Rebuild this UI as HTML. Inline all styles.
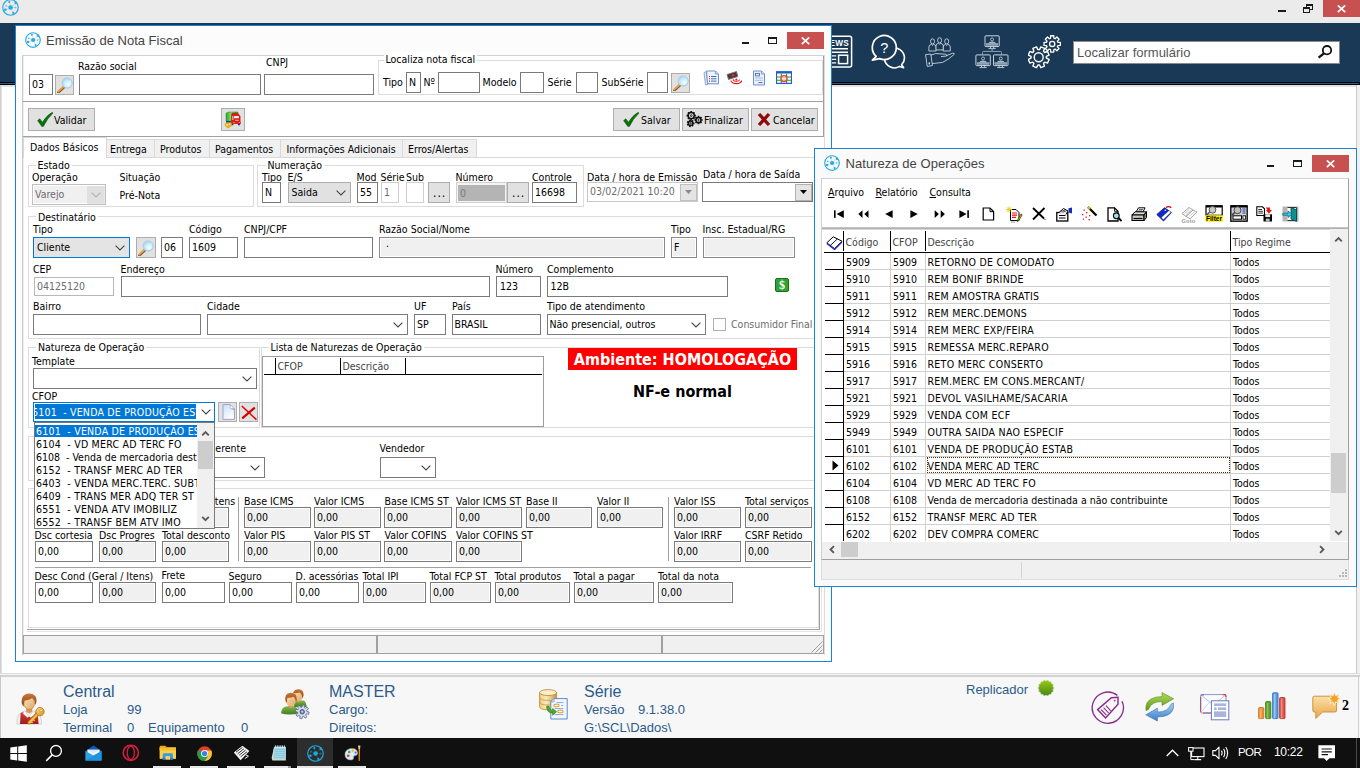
<!DOCTYPE html>
<html lang="pt-BR"><head><meta charset="utf-8"><title>Emissão de Nota Fiscal</title>
<style>
*{margin:0;padding:0}
html,body{width:1360px;height:768px;overflow:hidden;background:#fff}
body{position:relative;font-family:"DejaVu Sans Condensed","Liberation Sans",sans-serif;font-size:10.5px;color:#000}
div,span,svg.a{position:absolute;box-sizing:content-box}
.t{white-space:nowrap;line-height:14px;height:14px}
.f{border:1px solid #7a7a7a;background:#fff;white-space:nowrap;overflow:hidden;text-indent:2px}
.g{background:#f0f0f0;box-shadow:inset 0 0 0 1px #fff}
.d{color:#6d6d6d}
.btn{border:1px solid #adadad;background:#e1e1e1;box-sizing:border-box}
.ar{font-family:"Liberation Sans",sans-serif;color:#2b5b8c;white-space:nowrap}
.ti{font-family:"Liberation Sans",sans-serif;font-size:13px;color:#444;white-space:nowrap;line-height:18px}
</style></head>
<body>
<div style="left:0px;top:0px;width:1360px;height:23px;background:#ebebeb"></div>
<svg class="a" style="left:2px;top:-1px" width="17" height="17" viewBox="0 0 16 16" ><circle cx="8" cy="8" r="7.3" fill="none" stroke="#29abe2" stroke-width="1.15"/>
<path d="M8.1 8L6.9 2.8M8.1 8L13 3.7M8.1 8L3.1 10.1M8.1 8L10.6 13.1M8.1 8L3.6 6.2M8.1 8L12.9 8" stroke="#29abe2" stroke-width="0.45" opacity="0.5"/>
<circle cx="8.1" cy="8" r="2.1" fill="#29abe2"/>
<circle cx="6.9" cy="2.8" r="1" fill="#29abe2"/><circle cx="13" cy="3.7" r="1.3" fill="#29abe2"/>
<circle cx="3.1" cy="10.1" r="1.25" fill="#29abe2"/><circle cx="10.6" cy="13.1" r="1.05" fill="#29abe2"/>
<path d="M2.9 6.9L3.8 5.3L4.6 6.9Z" fill="#29abe2"/><circle cx="12.8" cy="8" r="0.9" fill="#29abe2" opacity="0.55"/></svg>
<div style="left:1278px;top:10px;width:8px;height:2px;background:#1a1a1a"></div>
<div style="left:1306px;top:4px;width:7px;height:6px;border:1px solid #1a1a1a;border-top-width:2px;box-sizing:border-box"></div>
<div style="left:1303px;top:7px;width:7px;height:6px;border:1px solid #1a1a1a;border-top-width:2px;box-sizing:border-box;background:#ebebeb"></div>
<div style="left:1323px;top:0px;width:37px;height:17px;background:#c75050"></div>
<svg class="a" style="left:1337px;top:5px" width="9" height="7.5" viewBox="0 0 9 7.5" ><path d="M0.8 0.4L8.2 7.1M8.2 0.4L0.8 7.1" stroke="#fff" stroke-width="1.7"/></svg>
<div style="left:0px;top:23px;width:1360px;height:59px;background:#193956"></div>
<div style="left:0px;top:82px;width:1360px;height:3px;background:#000"></div>
<div style="left:0px;top:83px;width:1359px;height:1px;background:#2a5a8a"></div>
<div style="left:0px;top:85px;width:1360px;height:2px;background:#e2e2e2"></div>
<div style="left:0px;top:85px;width:1px;height:588px;background:#cfcfcf"></div>
<div style="left:1px;top:85px;width:1px;height:588px;background:#e2e2e2"></div>
<div style="left:1356px;top:85px;width:1px;height:588px;background:#c9c9c9"></div>
<div style="left:1357px;top:85px;width:3px;height:588px;background:#f0f0f0"></div>
<svg class="a" style="left:820px;top:35px" width="33" height="34" viewBox="0 0 33 34" id="hdr-news"><rect x="1" y="1.2" width="30.6" height="30.8" rx="2" fill="none" stroke="#ffffff" stroke-width="1.5"/><text x="3.2" y="10.6" font-family="Liberation Sans,sans-serif" font-weight="bold" font-size="8.2" fill="#ffffff" letter-spacing="0.3">NEWS</text><path d="M4 13.7H28M4 17.2H28" stroke="#ffffff" stroke-width="1.5"/><path d="M4 20.9H16.2M4 24.4H16.2M4 27.9H16.2" stroke="#ffffff" stroke-width="1.4"/><rect x="18.6" y="20.2" width="9" height="8.4" fill="none" stroke="#ffffff" stroke-width="1.5"/></svg>
<svg class="a" style="left:870px;top:34px" width="36" height="36" viewBox="0 0 36 36" ><path d="M29.6 32.4A10 10 0 1 1 31.6 30.8L33.6 33.8Z" fill="none" stroke="#ffffff" stroke-width="1.6" stroke-linejoin="round"/><path d="M6.2 22.4A12 12 0 1 1 9.6 24.6L2.4 26.2Z" fill="#193956" stroke="#ffffff" stroke-width="1.7" stroke-linejoin="round"/><text x="14.3" y="19.2" text-anchor="middle" font-family="Liberation Sans,sans-serif" font-size="14.5" fill="#ffffff">?</text></svg>
<svg class="a" style="left:925px;top:35px" width="31" height="33" viewBox="0 0 31 33" ><path d="M3.9 16.0V12.0Q3.9 9.8 6.3 9.4L7.5 10.4L8.7 9.4Q11.1 9.8 11.1 12.0V16.0Z" fill="#193956" stroke="#dfe6ec" stroke-width="0.8"/><ellipse cx="7.5" cy="6.4" rx="2" ry="2.6" fill="#193956" stroke="#dfe6ec" stroke-width="0.8"/><path d="M18.099999999999998 16.0V12.0Q18.099999999999998 9.8 20.5 9.4L21.7 10.4L22.9 9.4Q25.3 9.8 25.3 12.0V16.0Z" fill="#193956" stroke="#dfe6ec" stroke-width="0.8"/><ellipse cx="21.7" cy="6.4" rx="2" ry="2.6" fill="#193956" stroke="#dfe6ec" stroke-width="0.8"/><path d="M11.0 14.899999999999999V10.899999999999999Q11.0 8.7 13.4 8.3L14.6 9.3L15.799999999999999 8.3Q18.2 8.7 18.2 10.899999999999999V14.899999999999999Z" fill="#193956" stroke="#dfe6ec" stroke-width="0.8"/><ellipse cx="14.6" cy="5.3" rx="2" ry="2.6" fill="#193956" stroke="#dfe6ec" stroke-width="0.8"/><path d="M0.6 19.6L5.8 19L7.4 30.6L2.2 31.4Z" fill="none" stroke="#dfe6ec" stroke-width="0.8"/><path d="M5.9 20.2Q11 17.6 15 18.8L20.5 19.2Q22.4 19.6 21.6 21L16 21.6M21.6 20.6L27.6 18.2Q29.8 17.8 29.2 19.4Q23 25 17.6 27.4L7.2 28.6" fill="none" stroke="#dfe6ec" stroke-width="0.8" stroke-linejoin="round"/><rect x="3.6" y="27.4" width="1.4" height="2" fill="#dfe6ec"/></svg>
<svg class="a" style="left:975px;top:35px" width="34" height="34" viewBox="0 0 34 34" ><rect x="10" y="0.8" width="14.2" height="10.8" rx="0.8" fill="none" stroke="#dfe6ec" stroke-width="0.9"/><rect x="11" y="8.200000000000001" width="12.2" height="2.6" fill="#8fa3b4"/><circle cx="17.1" cy="4.4" r="1.5" fill="none" stroke="#dfe6ec" stroke-width="0.7"/><path d="M13.100000000000001 8.400000000000002Q13.700000000000001 6.6 17.1 6.3999999999999995Q20.5 6.6 21.1 8.400000000000002Z" fill="#a9b9c6"/><path d="M15.500000000000002 11.600000000000001V13.200000000000001M18.700000000000003 11.600000000000001V13.200000000000001M13.500000000000002 13.600000000000001H20.700000000000003" stroke="#dfe6ec" stroke-width="0.8"/><rect x="0.9" y="19.9" width="14.4" height="10.7" rx="0.8" fill="none" stroke="#dfe6ec" stroke-width="0.9"/><rect x="1.9" y="27.2" width="12.4" height="2.6" fill="#8fa3b4"/><circle cx="8.1" cy="23.5" r="1.5" fill="none" stroke="#dfe6ec" stroke-width="0.7"/><path d="M4.1 27.4Q4.699999999999999 25.7 8.1 25.5Q11.5 25.7 12.1 27.4Z" fill="#a9b9c6"/><path d="M6.5 30.599999999999998V32.199999999999996M9.7 30.599999999999998V32.199999999999996M4.5 32.599999999999994H11.7" stroke="#dfe6ec" stroke-width="0.8"/><rect x="18.5" y="19.9" width="14.5" height="10.7" rx="0.8" fill="none" stroke="#dfe6ec" stroke-width="0.9"/><rect x="19.5" y="27.2" width="12.5" height="2.6" fill="#8fa3b4"/><circle cx="25.75" cy="23.5" r="1.5" fill="none" stroke="#dfe6ec" stroke-width="0.7"/><path d="M21.75 27.4Q22.35 25.7 25.75 25.5Q29.15 25.7 29.75 27.4Z" fill="#a9b9c6"/><path d="M24.15 30.599999999999998V32.199999999999996M27.35 30.599999999999998V32.199999999999996M22.15 32.599999999999994H29.35" stroke="#dfe6ec" stroke-width="0.8"/><path d="M17.1 14V16.4M7.6 19.6V17.4Q7.6 16.4 8.6 16.4H25.4Q26.4 16.4 26.4 17.4V19.6" fill="none" stroke="#8fa3b4" stroke-width="1"/></svg>
<svg class="a" style="left:1027.5px;top:35px" width="34" height="34" viewBox="0 0 34 34" ><path d="M18.36 23.13 L21.08 24.47 L19.57 28.10 L16.70 27.13 L15.53 28.30 L16.50 31.17 L12.87 32.68 L11.53 29.96 L9.87 29.96 L8.53 32.68 L4.90 31.17 L5.87 28.30 L4.70 27.13 L1.83 28.10 L0.32 24.47 L3.04 23.13 L3.04 21.47 L0.32 20.13 L1.83 16.50 L4.70 17.47 L5.87 16.30 L4.90 13.43 L8.53 11.92 L9.87 14.64 L11.53 14.64 L12.87 11.92 L16.50 13.43 L15.53 16.30 L16.70 17.47 L19.57 16.50 L21.08 20.13 L18.36 21.47Z" fill="none" stroke="#ffffff" stroke-width="1.4" stroke-linejoin="round"/><circle cx="10.7" cy="22.3" r="4.5" fill="none" stroke="#ffffff" stroke-width="1.4"/><path d="M29.86 7.24 L32.36 7.36 L32.36 10.44 L29.86 10.56 L29.38 11.73 L31.06 13.58 L28.88 15.76 L27.03 14.08 L25.86 14.56 L25.74 17.06 L22.66 17.06 L22.54 14.56 L21.37 14.08 L19.52 15.76 L17.34 13.58 L19.02 11.73 L18.54 10.56 L16.04 10.44 L16.04 7.36 L18.54 7.24 L19.02 6.07 L17.34 4.22 L19.52 2.04 L21.37 3.72 L22.54 3.24 L22.66 0.74 L25.74 0.74 L25.86 3.24 L27.03 3.72 L28.88 2.04 L31.06 4.22 L29.38 6.07Z" fill="#193956" stroke="#ffffff" stroke-width="1.3" stroke-linejoin="round"/><circle cx="24.2" cy="8.9" r="2.6" fill="none" stroke="#ffffff" stroke-width="1.3"/></svg>
<div style="left:1073px;top:41px;width:267px;height:23px;background:#fff;border:1px solid #8a8a8a;box-sizing:border-box"></div>
<span style="left:1077px;top:44px;font:13px 'Liberation Sans',sans-serif;color:#555;line-height:18px;white-space:nowrap">Localizar formulário</span>
<svg class="a" style="left:1317px;top:44px" width="16" height="16" viewBox="0 0 16 16" ><circle cx="10" cy="6.2" r="4.2" fill="none" stroke="#111" stroke-width="1.8"/><path d="M7 9.4L1.6 13.6" stroke="#111" stroke-width="2.4" stroke-linecap="butt"/></svg>
<div style="left:15px;top:25px;width:817px;height:637px;background:#fff;border:1px solid #1883d7;box-sizing:border-box"></div>
<div style="left:16px;top:26px;width:815px;height:29px;background:#fcfcfc"></div>
<svg class="a" style="left:25px;top:32px" width="16" height="16" viewBox="0 0 16 16" ><circle cx="8" cy="8" r="7.3" fill="none" stroke="#29abe2" stroke-width="1.15"/>
<path d="M8.1 8L6.9 2.8M8.1 8L13 3.7M8.1 8L3.1 10.1M8.1 8L10.6 13.1M8.1 8L3.6 6.2M8.1 8L12.9 8" stroke="#29abe2" stroke-width="0.45" opacity="0.5"/>
<circle cx="8.1" cy="8" r="2.1" fill="#29abe2"/>
<circle cx="6.9" cy="2.8" r="1" fill="#29abe2"/><circle cx="13" cy="3.7" r="1.3" fill="#29abe2"/>
<circle cx="3.1" cy="10.1" r="1.25" fill="#29abe2"/><circle cx="10.6" cy="13.1" r="1.05" fill="#29abe2"/>
<path d="M2.9 6.9L3.8 5.3L4.6 6.9Z" fill="#29abe2"/><circle cx="12.8" cy="8" r="0.9" fill="#29abe2" opacity="0.55"/></svg>
<span class="ti" style="left:46px;top:32px">Emissão de Nota Fiscal</span>
<div style="left:742px;top:42px;width:7px;height:2px;background:#1a1a1a"></div>
<div style="left:768px;top:37px;width:9px;height:7px;border:1px solid #1a1a1a;border-top-width:2px;box-sizing:border-box"></div>
<div style="left:787px;top:32px;width:37px;height:17px;background:#c75050"></div>
<svg class="a" style="left:801px;top:37px" width="9" height="7.5" viewBox="0 0 9 7.5" ><path d="M0.8 0.4L8.2 7.1M8.2 0.4L0.8 7.1" stroke="#fff" stroke-width="1.7"/></svg>
<div style="left:16px;top:55px;width:815px;height:606px;background:#fcfcfc"></div>
<div style="left:23px;top:56px;width:800px;height:578px;background:#fff"></div>
<div style="left:22px;top:55px;width:802px;height:1px;background:#d2d2d2"></div>
<div style="left:22px;top:55px;width:1px;height:600px;background:#c8c8c8"></div>
<div style="left:23px;top:56px;width:1px;height:599px;background:#f0f0f0"></div>
<div style="left:823px;top:56px;width:1px;height:81px;background:#a0a0a0"></div>
<div style="left:824px;top:55px;width:1px;height:600px;background:#dcdcdc"></div>
<span class="t" style="left:78px;top:59px;">Razão social</span>
<span class="t" style="left:266px;top:55px;">CNPJ</span>
<div class="f" style="left:29px;top:74px;width:22px;height:19px;line-height:18px;">03</div>
<div class="btn" style="left:55px;top:75px;width:19px;height:20px;"></div>
<svg class="a" style="left:56.5px;top:76.5px" width="16" height="16" viewBox="0 0 16 16" ><defs><radialGradient id="gLens" cx="0.62" cy="0.66" r="0.75"><stop offset="0" stop-color="#f4ffff"/><stop offset="0.55" stop-color="#c4ecfc"/><stop offset="1" stop-color="#9ccaf2"/></radialGradient></defs><path d="M6.9 10.2L1.3 15.4" stroke="#6a6258" stroke-width="2.6" stroke-linecap="round"/><path d="M6.7 9.7L1.1 14.7" stroke="#f8a02c" stroke-width="1.7" stroke-linecap="round"/><circle cx="10.3" cy="6.3" r="5.1" fill="#8c9aa6" opacity="0.55"/><circle cx="10.1" cy="5.9" r="5" fill="url(#gLens)" stroke="#b4c6e4" stroke-width="0.8"/></svg>
<div class="f" style="left:79px;top:74px;width:180px;height:19px;line-height:18px;"></div>
<div class="f" style="left:264px;top:74px;width:108px;height:19px;line-height:18px;"></div>
<div style="left:378px;top:59.5px;width:445px;height:35.5px;border:1px solid #dcdcdc;box-sizing:border-box"></div>
<span class="t gl" style="left:383.5px;top:52px;padding:0 2px;background:#fff">Localiza nota fiscal</span>
<span class="t" style="left:383px;top:75px;">Tipo</span>
<div class="f" style="left:406px;top:72px;width:13px;height:19px;line-height:18px;">N</div>
<span class="t" style="left:423.5px;top:75px;">Nº</span>
<div class="f" style="left:438px;top:72px;width:40px;height:19px;line-height:18px;"></div>
<span class="t" style="left:482.5px;top:75px;">Modelo</span>
<div class="f" style="left:520px;top:72px;width:22px;height:19px;line-height:18px;"></div>
<span class="t" style="left:547.5px;top:75px;">Série</span>
<div class="f" style="left:576px;top:72px;width:20px;height:19px;line-height:18px;"></div>
<span class="t" style="left:601.5px;top:75px;">SubSérie</span>
<div class="f" style="left:647px;top:72px;width:19px;height:19px;line-height:18px;"></div>
<div class="btn" style="left:671px;top:73px;width:19px;height:20px;"></div>
<svg class="a" style="left:672.5px;top:75px" width="16" height="16" viewBox="0 0 16 16" ><defs><radialGradient id="gLens" cx="0.62" cy="0.66" r="0.75"><stop offset="0" stop-color="#f4ffff"/><stop offset="0.55" stop-color="#c4ecfc"/><stop offset="1" stop-color="#9ccaf2"/></radialGradient></defs><path d="M6.9 10.2L1.3 15.4" stroke="#6a6258" stroke-width="2.6" stroke-linecap="round"/><path d="M6.7 9.7L1.1 14.7" stroke="#f8a02c" stroke-width="1.7" stroke-linecap="round"/><circle cx="10.3" cy="6.3" r="5.1" fill="#8c9aa6" opacity="0.55"/><circle cx="10.1" cy="5.9" r="5" fill="url(#gLens)" stroke="#b4c6e4" stroke-width="0.8"/></svg>
<svg class="a" style="left:703px;top:70px" width="16" height="16" viewBox="0 0 16 16" ><path d="M1 2.5L3.5 1.5L5 14.5L2.5 15Z" fill="#dfe9f7" stroke="#7d98c8" stroke-width="0.8"/><path d="M3.5 1H12.5L15.5 4V13.8H4.5Z" fill="#eef4fc" stroke="#6f8fd0" stroke-width="1"/><path d="M12.5 1V4H15.5" fill="#cddcf4" stroke="#6f8fd0" stroke-width="0.8"/><path d="M8 6.5H13.5M8 8.8H13.5M8 11.1H13.5" stroke="#4b6fc0" stroke-width="1"/><path d="M6 6.5H7M6 8.8H7M6 11.1H7" stroke="#d02020" stroke-width="1.1"/></svg>
<svg class="a" style="left:726px;top:70px" width="16" height="16" viewBox="0 0 16 16" ><path d="M1 4.5L10.5 1.5L11.8 6.5L2.5 9.5Z" fill="#3a3a3a" stroke="#777" stroke-width="0.9"/><path d="M3.5 5.2L9.5 3.4L10 5.6L4.2 7.4Z" fill="#8a2a2a"/><circle cx="7" cy="5.3" r="1.1" fill="#ff3030"/><path d="M7.2 9.2A3.2 1.7 0 1 0 13.5 9.6" fill="none" stroke="#e01818" stroke-width="1"/><path d="M5 10.6A5.2 3 0 1 0 15.6 10.5" fill="none" stroke="#e01818" stroke-width="1.1"/><circle cx="10.3" cy="9.6" r="1" fill="#e01818"/></svg>
<svg class="a" style="left:752px;top:70px" width="14" height="16" viewBox="0 0 14 16" ><path d="M1.5 1H9.5L12.5 4V15H1.5Z" fill="#eaf1fb" stroke="#6f8fd0" stroke-width="1"/><path d="M9.5 1V4H12.5" fill="#cddcf4" stroke="#6f8fd0" stroke-width="0.8"/><rect x="3.5" y="3.5" width="4" height="2.4" fill="none" stroke="#4b6fc0" stroke-width="0.9"/><path d="M3.5 8H10.5M3.5 10.3H10.5" stroke="#6f8fd0" stroke-width="0.9" stroke-dasharray="1.2 0.8"/><path d="M6.5 12.6H10.5" stroke="#4b6fc0" stroke-width="1"/></svg>
<svg class="a" style="left:776px;top:71px" width="16" height="13" viewBox="0 0 16 13" ><rect x="0.5" y="0.8" width="15" height="11.6" fill="#fff" stroke="#1f5fc8" stroke-width="1.2"/><rect x="0.5" y="0.5" width="15" height="2" fill="#1f5fc8"/><path d="M0.5 6H15.5M0.5 9.3H15.5M5.3 2.5V12.4M10.6 2.5V12.4" stroke="#2e8b3a" stroke-width="1.1"/><circle cx="8" cy="7.6" r="3" fill="#f3d9cf" fill-opacity="0.7" stroke="#e8452c" stroke-width="1.2"/></svg>
<div style="left:23px;top:101px;width:800px;height:1px;background:#a0a0a0"></div>
<div class="btn" style="left:28px;top:108px;width:67px;height:23px;"></div>
<svg class="a" style="left:37px;top:112.3px" width="16.5" height="15" viewBox="0 0 16.5 15" ><path d="M0.6 8.6L2.8 6.8L5.4 10.2Q9.4 3.6 15.2 0.3L16 1.1Q10 6.8 6.4 14.4H4.8Z" fill="#0b720b" stroke="#064a06" stroke-width="0.5" stroke-linejoin="round"/></svg>
<span class="t" style="left:54px;top:113px;">Validar</span>
<div class="btn" style="left:221px;top:108px;width:24px;height:23px;"></div>
<svg class="a" style="left:221px;top:108px" width="24" height="23" viewBox="0 0 24 23" ><defs><linearGradient id="gTk" x1="0" y1="0" x2="1" y2="0"><stop offset="0" stop-color="#2ea02e"/><stop offset="0.45" stop-color="#86e466"/><stop offset="1" stop-color="#2ea02e"/></linearGradient></defs><path d="M5 5.2L7.6 4H16.8V6H10.6V13.2H5Z" fill="url(#gTk)" stroke="#1f8a1f" stroke-width="0.5"/><rect x="5" y="13" width="5.6" height="1.6" fill="#1838c0"/><path d="M10.6 6.4Q10.6 5.2 11.8 5.2H17L19.2 8.2V15.4H10.4Z" fill="#e01a14" stroke="#b00c0c" stroke-width="0.4"/><rect x="11.4" y="8" width="1" height="4" fill="#f6d8e8"/><rect x="13" y="8.1" width="4.9" height="2.2" rx="0.4" fill="#d8f6fc"/><rect x="14.2" y="11.8" width="3.6" height="0.9" fill="#f4c0c0"/><rect x="11.6" y="13.8" width="8.4" height="2" rx="0.6" fill="#e01a14"/><rect x="12.2" y="14.1" width="1.6" height="0.9" fill="#f8b020"/><rect x="17.8" y="14.1" width="1.6" height="0.9" fill="#f8b020"/><ellipse cx="11.4" cy="16.4" rx="1.1" ry="0.9" fill="#1030b0"/><ellipse cx="18" cy="16.4" rx="1.2" ry="0.9" fill="#1030b0"/><path d="M4 16.2Q4.4 14.6 6.4 15L8.6 14.6Q10.8 14.8 10.8 16.6Q10.8 18.4 9 18.6Q8.6 19.8 7 19.8Q5.6 19.8 5.4 18.6Q3.8 18.2 4 16.2Z" fill="#f0b400" stroke="#c88c00" stroke-width="0.4"/><ellipse cx="6" cy="16.8" rx="0.9" ry="0.7" fill="#fff6b0"/><ellipse cx="8.4" cy="16.4" rx="0.8" ry="0.6" fill="#fff6b0"/></svg>
<div class="btn" style="left:613px;top:108px;width:67px;height:23px;"></div>
<svg class="a" style="left:623px;top:112.3px" width="16.5" height="15" viewBox="0 0 16.5 15" ><path d="M0.6 8.6L2.8 6.8L5.4 10.2Q9.4 3.6 15.2 0.3L16 1.1Q10 6.8 6.4 14.4H4.8Z" fill="#0b720b" stroke="#064a06" stroke-width="0.5" stroke-linejoin="round"/></svg>
<span class="t" style="left:641px;top:113px;">Salvar</span>
<div class="btn" style="left:682px;top:108px;width:67px;height:23px;"></div>
<svg class="a" style="left:686px;top:111px" width="17" height="17" viewBox="0 0 17 17" ><circle cx="5.2" cy="4.6" r="3.1" fill="none" stroke="#111" stroke-width="1.5"/><path d="M8.0 4.6L9.9 4.6M7.2 6.6L8.5 7.9M5.2 7.4L5.2 9.3M3.2 6.6L1.9 7.9M2.4 4.6L0.5 4.6M3.2 2.6L1.9 1.3M5.2 1.8L5.2 -0.1M7.2 2.6L8.5 1.3" stroke="#111" stroke-width="1.7"/><circle cx="5.2" cy="4.6" r="0.9" fill="none" stroke="#111" stroke-width="0.9"/><circle cx="12.5" cy="9" r="2.6" fill="none" stroke="#111" stroke-width="1.5"/><path d="M14.8 9.0L16.7 9.0M14.1 10.6L15.5 12.0M12.5 11.3L12.5 13.2M10.9 10.6L9.5 12.0M10.2 9.0L8.3 9.0M10.9 7.4L9.5 6.0M12.5 6.7L12.5 4.8M14.1 7.4L15.5 6.0" stroke="#111" stroke-width="1.7"/><circle cx="12.5" cy="9" r="0.7" fill="none" stroke="#111" stroke-width="0.9"/><circle cx="4.6" cy="12.3" r="2.3" fill="none" stroke="#111" stroke-width="1.5"/><path d="M6.6 12.3L8.5 12.3M5.8 13.9L7.0 15.3M4.2 14.2L3.7 16.1M2.8 13.2L1.1 14.0M2.8 11.4L1.1 10.6M4.2 10.4L3.7 8.5M5.8 10.7L7.0 9.3" stroke="#111" stroke-width="1.7"/><circle cx="4.6" cy="12.3" r="0.7" fill="none" stroke="#111" stroke-width="0.9"/></svg>
<span class="t" style="left:704px;top:113px;">Finalizar</span>
<div class="btn" style="left:751px;top:108px;width:67px;height:23px;"></div>
<svg class="a" style="left:757px;top:112px" width="14" height="15" viewBox="0 0 14 15" ><path d="M2 2 L12 13 M12 2 L2 13" stroke="#8f0a0a" stroke-width="3.3" stroke-linecap="butt"/></svg>
<span class="t" style="left:773px;top:113px;">Cancelar</span>
<div style="left:23px;top:136px;width:800px;height:1px;background:#a0a0a0"></div>
<div style="left:23px;top:157px;width:800px;height:1px;background:#d9d9d9"></div>
<div style="left:23px;top:137px;width:84px;height:21px;background:#fff;border:1px solid #d9d9d9;border-bottom:none;box-sizing:border-box"></div>
<span class="t" style="left:30px;top:140px;">Dados Básicos</span>
<div style="left:106px;top:139px;width:49px;height:18px;background:#f0f0f0;border:1px solid #d9d9d9;border-bottom:none;box-sizing:border-box"></div>
<span class="t" style="left:110px;top:142px;">Entrega</span>
<div style="left:154px;top:139px;width:56px;height:18px;background:#f0f0f0;border:1px solid #d9d9d9;border-bottom:none;box-sizing:border-box"></div>
<span class="t" style="left:160px;top:142px;">Produtos</span>
<div style="left:209px;top:139px;width:72px;height:18px;background:#f0f0f0;border:1px solid #d9d9d9;border-bottom:none;box-sizing:border-box"></div>
<span class="t" style="left:215px;top:142px;">Pagamentos</span>
<div style="left:280px;top:139px;width:123px;height:18px;background:#f0f0f0;border:1px solid #d9d9d9;border-bottom:none;box-sizing:border-box"></div>
<span class="t" style="left:286.5px;top:142px;">Informações Adicionais</span>
<div style="left:402px;top:139px;width:75px;height:18px;background:#f0f0f0;border:1px solid #d9d9d9;border-bottom:none;box-sizing:border-box"></div>
<span class="t" style="left:408px;top:142px;">Erros/Alertas</span>
<div style="left:819px;top:157px;width:1px;height:473px;background:#a0a0a0"></div>
<div style="left:27px;top:629px;width:793px;height:1px;background:#a0a0a0"></div>
<div style="left:821px;top:157px;width:1px;height:475px;background:#e4e4e4"></div>
<div style="left:27px;top:631px;width:795px;height:1px;background:#e4e4e4"></div>
<div style="left:28px;top:165px;width:226px;height:41.5px;border:1px solid #dcdcdc;box-sizing:border-box"></div>
<span class="t gl" style="left:35.5px;top:158px;padding:0 2px;background:#fff">Estado</span>
<span class="t" style="left:32px;top:170px;">Operação</span>
<span class="t" style="left:119.5px;top:170px;">Situação</span>
<div class="f g d" style="left:32px;top:184px;width:72px;height:19px;line-height:18px;border-color:#bfbfbf">Varejo<svg style="position:absolute;right:4px;top:7px" width="10" height="6" viewBox="0 0 10 6"><path d="M0.6 0.6 L5 5 L9.4 0.6" fill="none" stroke="#9a9a9a" stroke-width="1.1"/></svg></div>
<div style="left:87px;top:185.5px;width:18px;height:18px;background:#cccccc;opacity:.45"></div>
<span class="t" style="left:119.5px;top:188px;">Pré-Nota</span>
<div style="left:257px;top:165px;width:327px;height:41.5px;border:1px solid #dcdcdc;box-sizing:border-box"></div>
<span class="t gl" style="left:265.5px;top:158px;padding:0 2px;background:#fff">Numeração</span>
<span class="t" style="left:262px;top:170px;">Tipo</span>
<span class="t" style="left:287.5px;top:170px;">E/S</span>
<span class="t" style="left:356.5px;top:170px;">Mod</span>
<span class="t" style="left:380.5px;top:170px;">Série</span>
<span class="t" style="left:406px;top:170px;">Sub</span>
<span class="t" style="left:455.5px;top:170px;">Número</span>
<span class="t" style="left:532px;top:170px;">Controle</span>
<div class="f" style="left:262px;top:182px;width:17px;height:19px;line-height:18px;">N</div>
<div class="f" style="left:288px;top:182px;width:61px;height:19px;line-height:18px;background:#e1e1e1;border-color:#adadad;text-indent:2.5px">Saida<svg style="position:absolute;right:4px;top:7px" width="10" height="6" viewBox="0 0 10 6"><path d="M0.6 0.6 L5 5 L9.4 0.6" fill="none" stroke="#444" stroke-width="1.1"/></svg></div>
<div class="f" style="left:357px;top:182px;width:19px;height:19px;line-height:18px;">55</div>
<div class="f d" style="left:381px;top:182px;width:16px;height:19px;line-height:18px;border-color:#d0d0d0">1</div>
<div class="f" style="left:406px;top:182px;width:16px;height:19px;line-height:18px;border-color:#d0d0d0"></div>
<div class="btn" style="left:428px;top:182px;width:22px;height:21px;"></div>
<span class="t" style="left:433px;top:186px;font-size:12px;letter-spacing:1px">...</span>
<div class="f" style="left:456px;top:182px;width:49px;height:19px;line-height:18px;border-color:#d0d0d0;background:#f4f4f4"></div>
<div style="left:458px;top:184.5px;width:47px;height:16.5px;background:#b4b4b4"></div>
<span class="t" style="left:460px;top:186px;color:#7a7a7a">0</span>
<div class="btn" style="left:507px;top:182px;width:22px;height:21px;"></div>
<span class="t" style="left:512px;top:186px;font-size:12px;letter-spacing:1px">...</span>
<div class="f" style="left:532px;top:182px;width:43px;height:19px;line-height:18px;">16698</div>
<span class="t" style="left:587px;top:170px;">Data / hora de Emissão</span>
<div class="f d" style="left:587px;top:182px;width:109px;height:18px;line-height:17px;border-color:#c8c8c8">03/02/2021 10:20</div>
<div style="left:680px;top:184px;width:17px;height:17px;background:#e4e4e4;border:1px solid #c0c0c0;box-sizing:border-box"></div>
<svg class="a" style="left:685px;top:190px" width="7" height="4" viewBox="0 0 7 4" ><path d="M0 0H7L3.5 4Z" fill="#8a8a8a"/></svg>
<span class="t" style="left:703px;top:167px;">Data / hora de Saída</span>
<div class="f" style="left:702px;top:182px;width:109px;height:18px;line-height:17px;"></div>
<div style="left:795px;top:184px;width:17px;height:17px;background:#e4e4e4;border:1px solid #b0b0b0;box-sizing:border-box"></div>
<svg class="a" style="left:800px;top:190px" width="7" height="4" viewBox="0 0 7 4" ><path d="M0 0H7L3.5 4Z" fill="#000"/></svg>
<div style="left:28px;top:216px;width:790.5px;height:122.5px;border:1px solid #dcdcdc;box-sizing:border-box"></div>
<span class="t gl" style="left:36px;top:210px;padding:0 2px;background:#fff">Destinatário</span>
<span class="t" style="left:33px;top:222px;">Tipo</span>
<span class="t" style="left:189px;top:222px;">Código</span>
<span class="t" style="left:244px;top:222px;">CNPJ/CPF</span>
<span class="t" style="left:379px;top:222px;">Razão Social/Nome</span>
<span class="t" style="left:671px;top:222px;">Tipo</span>
<span class="t" style="left:702.5px;top:222px;">Insc. Estadual/RG</span>
<div class="f" style="left:33px;top:237px;width:95px;height:19px;line-height:18px;background:#e4e4e4;border-color:#0078d7;text-indent:3px">Cliente<svg style="position:absolute;right:4px;top:7px" width="10" height="6" viewBox="0 0 10 6"><path d="M0.6 0.6 L5 5 L9.4 0.6" fill="none" stroke="#444" stroke-width="1.1"/></svg></div>
<div class="btn" style="left:136px;top:237px;width:20px;height:21px;"></div>
<svg class="a" style="left:138px;top:239.5px" width="16" height="16" viewBox="0 0 16 16" ><defs><radialGradient id="gLens" cx="0.62" cy="0.66" r="0.75"><stop offset="0" stop-color="#f4ffff"/><stop offset="0.55" stop-color="#c4ecfc"/><stop offset="1" stop-color="#9ccaf2"/></radialGradient></defs><path d="M6.9 10.2L1.3 15.4" stroke="#6a6258" stroke-width="2.6" stroke-linecap="round"/><path d="M6.7 9.7L1.1 14.7" stroke="#f8a02c" stroke-width="1.7" stroke-linecap="round"/><circle cx="10.3" cy="6.3" r="5.1" fill="#8c9aa6" opacity="0.55"/><circle cx="10.1" cy="5.9" r="5" fill="url(#gLens)" stroke="#b4c6e4" stroke-width="0.8"/></svg>
<div class="f" style="left:161px;top:237px;width:20px;height:19px;line-height:18px;">06</div>
<div class="f" style="left:189px;top:237px;width:47px;height:19px;line-height:18px;">1609</div>
<div class="f" style="left:244px;top:237px;width:127px;height:19px;line-height:18px;"></div>
<div class="f g" style="left:379px;top:237px;width:284px;height:19px;line-height:18px;border-color:#8a8a8a"><span style="top:-4px;left:4px">.</span></div>
<div class="f g" style="left:671px;top:237px;width:24px;height:19px;line-height:18px;border-color:#8a8a8a">F</div>
<div class="f g" style="left:703px;top:237px;width:90px;height:19px;line-height:18px;border-color:#8a8a8a"></div>
<span class="t" style="left:33px;top:262px;">CEP</span>
<span class="t" style="left:120.5px;top:262px;">Endereço</span>
<span class="t" style="left:495.5px;top:262px;">Número</span>
<span class="t" style="left:547px;top:262px;">Complemento</span>
<div class="f d" style="left:34px;top:277px;width:78px;height:17px;line-height:16px;border-color:#b8b8b8">04125120</div>
<div class="f" style="left:121px;top:276px;width:367px;height:19px;line-height:18px;"></div>
<div class="f" style="left:496px;top:276px;width:43px;height:19px;line-height:18px;text-indent:3px">123</div>
<div class="f" style="left:547px;top:276px;width:179px;height:19px;line-height:18px;text-indent:2.5px">12B</div>
<svg class="a" style="left:775px;top:278px" width="14" height="14" viewBox="0 0 14 14" ><rect x="0.5" y="0.5" width="13" height="13" rx="1.5" fill="#2fa32f" stroke="#1a6e1a"/><text x="7" y="11.3" text-anchor="middle" font-family="Liberation Serif,serif" font-weight="bold" font-size="12" fill="#fff">$</text></svg>
<span class="t" style="left:33px;top:299px;">Bairro</span>
<span class="t" style="left:207px;top:299px;">Cidade</span>
<span class="t" style="left:414px;top:299px;">UF</span>
<span class="t" style="left:452px;top:299px;">País</span>
<span class="t" style="left:547px;top:299px;">Tipo de atendimento</span>
<div class="f" style="left:33px;top:314px;width:166px;height:19px;line-height:18px;"></div>
<div class="f" style="left:207px;top:314px;width:199px;height:19px;line-height:18px;"><svg style="position:absolute;right:4px;top:7px" width="10" height="6" viewBox="0 0 10 6"><path d="M0.6 0.6 L5 5 L9.4 0.6" fill="none" stroke="#444" stroke-width="1.1"/></svg></div>
<div class="f" style="left:414px;top:314px;width:30px;height:19px;line-height:18px;">SP</div>
<div class="f" style="left:452px;top:314px;width:87px;height:19px;line-height:18px;text-indent:1.5px">BRASIL</div>
<div class="f" style="left:547px;top:314px;width:157px;height:19px;line-height:18px;text-indent:1.5px">Não presencial, outros<svg style="position:absolute;right:4px;top:7px" width="10" height="6" viewBox="0 0 10 6"><path d="M0.6 0.6 L5 5 L9.4 0.6" fill="none" stroke="#444" stroke-width="1.1"/></svg></div>
<div style="left:713px;top:317.5px;width:13px;height:13px;border:1px solid #b0b0b0;background:#fff;box-sizing:border-box"></div>
<span class="t" style="left:731px;top:317px;color:#6d6d6d">Consumidor Final</span>
<div style="left:28px;top:347px;width:231.5px;height:80.5px;border:1px solid #dcdcdc;box-sizing:border-box"></div>
<span class="t gl" style="left:36px;top:340px;padding:0 2px;background:#fff">Natureza de Operação</span>
<span class="t" style="left:32px;top:354px;">Template</span>
<div class="f" style="left:33px;top:368px;width:222px;height:19px;line-height:18px;"><svg style="position:absolute;right:4px;top:7px" width="10" height="6" viewBox="0 0 10 6"><path d="M0.6 0.6 L5 5 L9.4 0.6" fill="none" stroke="#444" stroke-width="1.1"/></svg></div>
<span class="t" style="left:32px;top:389px;">CFOP</span>
<div style="left:261px;top:347px;width:557.5px;height:80.5px;border:1px solid #dcdcdc;box-sizing:border-box"></div>
<span class="t gl" style="left:268.5px;top:340px;padding:0 2px;background:#fff">Lista de Naturezas de Operação</span>
<div style="left:262px;top:356px;width:282px;height:71px;border:1px solid #9c9ca6;background:#fff;box-sizing:border-box"></div>
<div style="left:264px;top:374px;width:278px;height:1px;background:#000"></div>
<div style="left:275px;top:357.5px;width:1px;height:16.5px;background:#000"></div>
<div style="left:340px;top:357.5px;width:1px;height:16.5px;background:#000"></div>
<div style="left:405px;top:357.5px;width:1px;height:16.5px;background:#000"></div>
<span class="t" style="left:277.5px;top:359px;color:#444">CFOP</span>
<span class="t" style="left:342.5px;top:359px;color:#444">Descrição</span>
<div style="left:568px;top:348px;width:229px;height:21.5px;background:#ff0000"></div>
<span style="left:568px;top:349px;width:229px;height:21.5px;line-height:21px;text-align:center;color:#fff;font-weight:bold;font-size:16px;white-space:nowrap">Ambiente: HOMOLOGAÇÃO</span>
<span style="left:568px;top:381px;width:229px;line-height:22px;text-align:center;color:#000;font-weight:bold;font-size:16px;white-space:nowrap">NF-e normal</span>
<div style="left:28px;top:435.5px;width:790.5px;height:45px;border:1px solid #dcdcdc;box-sizing:border-box"></div>
<span class="t" style="left:208px;top:441px;">Gerente</span>
<div class="f" style="left:150px;top:457px;width:113px;height:19px;line-height:18px;"><svg style="position:absolute;right:4px;top:7px" width="10" height="6" viewBox="0 0 10 6"><path d="M0.6 0.6 L5 5 L9.4 0.6" fill="none" stroke="#444" stroke-width="1.1"/></svg></div>
<span class="t" style="left:379.5px;top:441px;">Vendedor</span>
<div class="f" style="left:380px;top:457px;width:54px;height:19px;line-height:18px;"><svg style="position:absolute;right:4px;top:7px" width="10" height="6" viewBox="0 0 10 6"><path d="M0.6 0.6 L5 5 L9.4 0.6" fill="none" stroke="#444" stroke-width="1.1"/></svg></div>
<div style="left:28px;top:488px;width:790.5px;height:140px;border:1px solid #dcdcdc;box-sizing:border-box"></div>
<span class="t" style="left:212px;top:494px;">Itens</span>
<div class="f g" style="left:170px;top:507px;width:57px;height:19px;line-height:18px;"></div>
<div style="left:238px;top:497px;width:1px;height:64px;background:#a0a0a0"></div>
<span class="t" style="left:244px;top:494px;">Base ICMS</span>
<div class="f g" style="left:244px;top:507px;width:65px;height:19px;line-height:18px;">0,00</div>
<span class="t" style="left:314px;top:494px;">Valor ICMS</span>
<div class="f g" style="left:314px;top:507px;width:65px;height:19px;line-height:18px;">0,00</div>
<span class="t" style="left:384.5px;top:494px;">Base ICMS ST</span>
<div class="f g" style="left:384px;top:507px;width:66px;height:19px;line-height:18px;">0,00</div>
<span class="t" style="left:456px;top:494px;">Valor ICMS ST</span>
<div class="f g" style="left:456px;top:507px;width:64px;height:19px;line-height:18px;">0,00</div>
<span class="t" style="left:526px;top:494px;">Base II</span>
<div class="f g" style="left:526px;top:507px;width:64px;height:19px;line-height:18px;">0,00</div>
<span class="t" style="left:597px;top:494px;">Valor II</span>
<div class="f g" style="left:597px;top:507px;width:64px;height:19px;line-height:18px;">0,00</div>
<span class="t" style="left:244px;top:528px;">Valor PIS</span>
<div class="f g" style="left:244px;top:541px;width:65px;height:19px;line-height:18px;">0,00</div>
<span class="t" style="left:314px;top:528px;">Valor PIS ST</span>
<div class="f g" style="left:314px;top:541px;width:65px;height:19px;line-height:18px;">0,00</div>
<span class="t" style="left:384.5px;top:528px;">Valor COFINS</span>
<div class="f g" style="left:384px;top:541px;width:66px;height:19px;line-height:18px;">0,00</div>
<span class="t" style="left:456px;top:528px;">Valor COFINS ST</span>
<div class="f g" style="left:456px;top:541px;width:64px;height:19px;line-height:18px;">0,00</div>
<div style="left:668px;top:497px;width:1px;height:64px;background:#a0a0a0"></div>
<span class="t" style="left:674px;top:494px;">Valor ISS</span>
<div class="f g" style="left:674px;top:507px;width:65px;height:19px;line-height:18px;">0,00</div>
<span class="t" style="left:674px;top:528px;">Valor IRRF</span>
<div class="f g" style="left:674px;top:541px;width:65px;height:19px;line-height:18px;">0,00</div>
<span class="t" style="left:745px;top:494px;">Total serviços</span>
<div class="f g" style="left:745px;top:507px;width:65px;height:19px;line-height:18px;">0,00</div>
<span class="t" style="left:745px;top:528px;">CSRF Retido</span>
<div class="f g" style="left:745px;top:541px;width:65px;height:19px;line-height:18px;">0,00</div>
<span class="t" style="left:34.5px;top:528px;">Dsc cortesia</span>
<div class="f" style="left:35px;top:541px;width:56px;height:19px;line-height:18px;">0,00</div>
<span class="t" style="left:99px;top:528px;">Dsc Progres</span>
<div class="f g" style="left:99px;top:541px;width:55px;height:19px;line-height:18px;">0,00</div>
<span class="t" style="left:162px;top:528px;">Total desconto</span>
<div class="f g" style="left:162px;top:541px;width:65px;height:19px;line-height:18px;">0,00</div>
<div style="left:35px;top:566.5px;width:776px;height:1px;background:#a0a0a0"></div>
<span class="t" style="left:34.5px;top:569px;">Desc Cond (Geral / Itens)</span>
<div class="f" style="left:35px;top:582px;width:56px;height:19px;line-height:18px;">0,00</div>
<div class="f g" style="left:99px;top:582px;width:55px;height:19px;line-height:18px;">0,00</div>
<span class="t" style="left:161.5px;top:568px;">Frete</span>
<div class="f" style="left:162px;top:582px;width:61px;height:19px;line-height:18px;">0,00</div>
<span class="t" style="left:228.5px;top:569px;">Seguro</span>
<div class="f" style="left:229px;top:582px;width:61px;height:19px;line-height:18px;">0,00</div>
<span class="t" style="left:295.5px;top:569px;">D. acessórias</span>
<div class="f" style="left:296px;top:582px;width:61px;height:19px;line-height:18px;">0,00</div>
<span class="t" style="left:362.5px;top:569px;">Total IPI</span>
<div class="f g" style="left:363px;top:582px;width:61px;height:19px;line-height:18px;">0,00</div>
<span class="t" style="left:429.5px;top:569px;">Total FCP ST</span>
<div class="f g" style="left:430px;top:582px;width:59px;height:19px;line-height:18px;">0,00</div>
<span class="t" style="left:494.5px;top:569px;">Total produtos</span>
<div class="f g" style="left:495px;top:582px;width:73px;height:19px;line-height:18px;">0,00</div>
<span class="t" style="left:573.5px;top:569px;">Total a pagar</span>
<div class="f g" style="left:574px;top:582px;width:78px;height:19px;line-height:18px;">0,00</div>
<span class="t" style="left:658px;top:569px;">Total da nota</span>
<div class="f g" style="left:658px;top:582px;width:73px;height:19px;line-height:18px;">0,00</div>
<div style="left:33px;top:402px;width:182px;height:20px;border:1px solid #0078d7;background:#fff;box-sizing:border-box"></div>
<div style="left:35px;top:404px;width:161px;height:15px;background:#0078d7;overflow:hidden"><span class="t" style="left:-3px;top:0.5px;color:#fff;white-space:pre;letter-spacing:0.2px">6101  - VENDA DE PRODUÇÃO ESTAB</span></div>
<svg class="a" style="left:201px;top:409px" width="10" height="6" viewBox="0 0 10 6" ><path d="M0.6 0.6 L5 5 L9.4 0.6" fill="none" stroke="#444" stroke-width="1.1"/></svg>
<div class="btn" style="left:218px;top:402px;width:19px;height:20px;"></div>
<svg class="a" style="left:221.5px;top:404px" width="13.5" height="16" viewBox="0 0 13.5 16" ><defs><linearGradient id="gDoc" x1="0" y1="0" x2="0.6" y2="1"><stop offset="0" stop-color="#cfe0fa"/><stop offset="1" stop-color="#fbfdff"/></linearGradient></defs><path d="M1 0.6H8.2L12.4 4.8V15.4H1Z" fill="url(#gDoc)" stroke="#9ea2cc" stroke-width="1"/><path d="M8.2 0.6V4.8H12.4Z" fill="#fff" stroke="#9ea2cc" stroke-width="0.6"/><path d="M8.6 4.6H12.2V6.4Z" fill="#8c96b4" opacity="0.6"/></svg>
<div class="btn" style="left:239px;top:402px;width:19px;height:20px;"></div>
<svg class="a" style="left:241px;top:404.5px" width="16" height="15" viewBox="0 0 16 15" ><path d="M0.8 1L15.4 14.6" stroke="#e80000" stroke-width="1.5"/><path d="M13.8 2.6L1.2 13.4" stroke="#d00000" stroke-width="2.1"/></svg>
<div style="left:34px;top:422px;width:181px;height:107px;border:1px solid #7a7a7a;background:#fff;box-sizing:border-box"></div>
<div style="left:35px;top:424.5px;width:162px;height:12.5px;background:#0078d7"></div>
<div style="left:36px;top:424px;width:160.5px;height:14px;overflow:hidden"><span class="t" style="left:0;top:0;white-space:pre;letter-spacing:0.22px;color:#fff">6101  - VENDA DE PRODUÇÃO ESTAB</span></div>
<div style="left:36px;top:437px;width:160.5px;height:14px;overflow:hidden"><span class="t" style="left:0;top:0;white-space:pre;letter-spacing:0.22px;">6104  - VD MERC AD TERC FO</span></div>
<div style="left:36px;top:450px;width:160.5px;height:14px;overflow:hidden"><span class="t" style="left:0;top:0;white-space:pre;letter-spacing:0px;">6108  - Venda de mercadoria destinada</span></div>
<div style="left:36px;top:463px;width:160.5px;height:14px;overflow:hidden"><span class="t" style="left:0;top:0;white-space:pre;letter-spacing:0.22px;">6152  - TRANSF MERC AD TER</span></div>
<div style="left:36px;top:476px;width:160.5px;height:14px;overflow:hidden"><span class="t" style="left:0;top:0;white-space:pre;letter-spacing:0.22px;">6403  - VENDA MERC.TERC. SUBT</span></div>
<div style="left:36px;top:489px;width:160.5px;height:14px;overflow:hidden"><span class="t" style="left:0;top:0;white-space:pre;letter-spacing:0.22px;">6409  - TRANS MER ADQ TER ST</span></div>
<div style="left:36px;top:502px;width:160.5px;height:14px;overflow:hidden"><span class="t" style="left:0;top:0;white-space:pre;letter-spacing:0.22px;">6551  - VENDA ATV IMOBILIZ</span></div>
<div style="left:36px;top:515px;width:160.5px;height:14px;overflow:hidden"><span class="t" style="left:0;top:0;white-space:pre;letter-spacing:0.22px;">6552  - TRANSF BEM ATV IMO</span></div>
<div style="left:197px;top:423px;width:17px;height:105px;background:#f0f0f0"></div>
<div style="left:198px;top:441px;width:15px;height:28px;background:#cdcdcd"></div>
<svg class="a" style="left:201px;top:430px" width="9" height="6" viewBox="0 0 9 6" ><path d="M1.2 5.3L4.5 2L7.8 5.3" fill="none" stroke="#5a5a5a" stroke-width="1.9"/></svg>
<svg class="a" style="left:201px;top:516px" width="9" height="6" viewBox="0 0 9 6" ><path d="M1.2 0.9L4.5 4.2L7.8 0.9" fill="none" stroke="#5a5a5a" stroke-width="1.9"/></svg>
<div style="left:23px;top:634.5px;width:801px;height:19.5px;background:#f0f0f0;border:1px solid #a0a0a0;box-sizing:border-box"></div>
<div style="left:375.5px;top:635px;width:2px;height:19px;background:#a0a0a0"></div>
<div style="left:660.5px;top:635px;width:2px;height:19px;background:#a0a0a0"></div>
<svg class="a" style="left:811px;top:641px" width="12" height="12" viewBox="0 0 12 12" ><path d="M11.5 0.5L0.5 11.5M11.5 4.5L4.5 11.5M11.5 8.5L8.5 11.5" stroke="#a0a0a0" stroke-width="1"/></svg>
<div style="left:814px;top:148px;width:543px;height:439px;background:#fafafa;border:1px solid #1883d7;box-sizing:border-box"></div>
<div style="left:815px;top:149px;width:541px;height:29px;background:#fafafa"></div>
<svg class="a" style="left:824px;top:155px" width="16" height="16" viewBox="0 0 16 16" ><circle cx="8" cy="8" r="7.3" fill="none" stroke="#29abe2" stroke-width="1.15"/>
<path d="M8.1 8L6.9 2.8M8.1 8L13 3.7M8.1 8L3.1 10.1M8.1 8L10.6 13.1M8.1 8L3.6 6.2M8.1 8L12.9 8" stroke="#29abe2" stroke-width="0.45" opacity="0.5"/>
<circle cx="8.1" cy="8" r="2.1" fill="#29abe2"/>
<circle cx="6.9" cy="2.8" r="1" fill="#29abe2"/><circle cx="13" cy="3.7" r="1.3" fill="#29abe2"/>
<circle cx="3.1" cy="10.1" r="1.25" fill="#29abe2"/><circle cx="10.6" cy="13.1" r="1.05" fill="#29abe2"/>
<path d="M2.9 6.9L3.8 5.3L4.6 6.9Z" fill="#29abe2"/><circle cx="12.8" cy="8" r="0.9" fill="#29abe2" opacity="0.55"/></svg>
<span class="ti" style="left:845.5px;top:155px;letter-spacing:0.05px">Natureza de Operações</span>
<div style="left:1267px;top:165px;width:7px;height:2px;background:#1a1a1a"></div>
<div style="left:1293px;top:160px;width:9px;height:7px;border:1px solid #1a1a1a;border-top-width:2px;box-sizing:border-box"></div>
<div style="left:1312px;top:155px;width:37px;height:17px;background:#c75050"></div>
<svg class="a" style="left:1326px;top:160px" width="9" height="7.5" viewBox="0 0 9 7.5" ><path d="M0.8 0.4L8.2 7.1M8.2 0.4L0.8 7.1" stroke="#fff" stroke-width="1.7"/></svg>
<div style="left:821px;top:178px;width:528px;height:382px;background:#fff;border:1px solid #d0d0d0;border-right-color:#a0a0a0;border-bottom-color:#a0a0a0;box-sizing:border-box"></div>
<span class="t" style="left:828px;top:185px;"><u>A</u>rquivo</span>
<span class="t" style="left:875.5px;top:185px;"><u>R</u>elatório</span>
<span class="t" style="left:929.5px;top:185px;"><u>C</u>onsulta</span>
<svg class="a" style="left:834px;top:209.5px" width="11" height="8" viewBox="0 0 11 8" ><rect x="0" y="0.3" width="1.6" height="7.6" fill="#000"/><path d="M9.8 0.3V7.9L2.6 4.1Z" fill="#000"/></svg>
<svg class="a" style="left:858px;top:209.5px" width="12" height="8" viewBox="0 0 12 8" ><path d="M4.5 0.3V7.9L0.3 4.1Z" fill="#000"/><path d="M10.5 0.3V7.9L6.3 4.1Z" fill="#000"/></svg>
<svg class="a" style="left:885px;top:209.5px" width="8" height="8" viewBox="0 0 8 8" ><path d="M7.6 0.3V7.9L0.2 4.1Z" fill="#000"/></svg>
<svg class="a" style="left:910px;top:209.5px" width="8" height="8" viewBox="0 0 8 8" ><path d="M0.4 0.3V7.9L7.8 4.1Z" fill="#000"/></svg>
<svg class="a" style="left:934px;top:209.5px" width="12" height="8" viewBox="0 0 12 8" ><path d="M0.7 0.3V7.9L4.9 4.1Z" fill="#000"/><path d="M6.7 0.3V7.9L10.9 4.1Z" fill="#000"/></svg>
<svg class="a" style="left:959px;top:209.5px" width="11" height="8" viewBox="0 0 11 8" ><path d="M0.4 0.3V7.9L7.6 4.1Z" fill="#000"/><rect x="8.3" y="0.3" width="1.6" height="7.6" fill="#000"/></svg>
<svg class="a" style="left:982px;top:206.5px" width="13" height="14" viewBox="0 0 13 14" ><path d="M1.2 1H8L11.6 4.6V13H1.2Z" fill="#fff" stroke="#000" stroke-width="1.2"/><path d="M8 1V4.6H11.6" fill="none" stroke="#000" stroke-width="1"/></svg>
<svg class="a" style="left:1005px;top:205.5px" width="18" height="17" viewBox="0 0 18 17" ><path d="M5.5 3.5H11L14 6.5V14.5H5.5Z" fill="#fff" stroke="#000" stroke-width="1"/><path d="M7 7H12M7 9.2H12M7 11.4H11" stroke="#e81010" stroke-width="1.2"/><path d="M4 0.5V6.5M1 3.5H7M1.8 1.3L6.2 5.7M6.2 1.3L1.8 5.7" stroke="#e8c800" stroke-width="0.9"/><path d="M16 8L12.6 13.8L12.2 15.6L13.8 14.6L17.2 8.8Z" fill="#e8c000" stroke="#222" stroke-width="0.7"/><path d="M6.5 16H10.5" stroke="#000" stroke-width="0.8" stroke-dasharray="1 1"/></svg>
<svg class="a" style="left:1031.5px;top:206.5px" width="14" height="14" viewBox="0 0 14 14" ><path d="M1 1L12 11.5M12.5 1L1 12.5" stroke="#000" stroke-width="1.8"/><path d="M12 11.5L13.5 13" stroke="#000" stroke-width="0.8"/></svg>
<svg class="a" style="left:1055.5px;top:206.5px" width="17" height="15" viewBox="0 0 17 15" ><rect x="0.8" y="5.5" width="11" height="8.5" fill="#fff" stroke="#000" stroke-width="1.3"/><path d="M3 8.5H9.5M3 11H9.5" stroke="#000" stroke-width="1.1"/><path d="M3 5.5L7.5 1.5L12 4L10 7.5" fill="#e8e8e8" stroke="#000" stroke-width="1"/><path d="M12.5 1.2L16 0.5V6.5L12.5 5.5Z" fill="#1a2bb0"/><path d="M5 4.5L9 3M6.5 5.2L10 4" stroke="#000" stroke-width="0.6"/></svg>
<svg class="a" style="left:1081px;top:206px" width="17" height="15" viewBox="0 0 17 15" ><path d="M7 1L15.5 9.5" stroke="#000" stroke-width="2.2"/><path d="M7 1L9 3" stroke="#e8c000" stroke-width="2.2"/><g fill="#e01818"><rect x="2.5" y="3.5" width="1.3" height="1.3"/><rect x="5" y="6" width="1.3" height="1.3"/><rect x="1" y="8" width="1.3" height="1.3"/><rect x="8" y="9" width="1.3" height="1.3"/><rect x="4.5" y="10.5" width="1.3" height="1.3"/><rect x="1.8" y="12.5" width="1.3" height="1.3"/><rect x="7.5" y="13" width="1.3" height="1.3"/></g></svg>
<svg class="a" style="left:1106.5px;top:207px" width="17" height="15" viewBox="0 0 17 15" ><path d="M1 0.8H7.5L11 4.3V14H1Z" fill="#fff" stroke="#000" stroke-width="1.3"/><path d="M7.5 0.8V4.3H11" fill="none" stroke="#000" stroke-width="0.9"/><circle cx="9.3" cy="8.8" r="2.9" fill="#9fe0e8" stroke="#000" stroke-width="1.1"/><path d="M11.5 11L14.5 14" stroke="#000" stroke-width="1.8"/></svg>
<svg class="a" style="left:1131px;top:206.5px" width="17" height="15" viewBox="0 0 17 15" ><path d="M5 5L7.5 0.8H14L12 5Z" fill="#fff" stroke="#000" stroke-width="1"/><path d="M7.8 2.5H12M7 4H11.2" stroke="#000" stroke-width="0.6"/><path d="M1 8L4 4.8H15.5L13 8Z" fill="#d8d8d8" stroke="#000" stroke-width="1"/><path d="M1 8H13V13.5H1Z" fill="#c8c8c8" stroke="#000" stroke-width="1.1"/><path d="M13 8L15.5 4.8V10.5L13 13.5Z" fill="#8a8a8a" stroke="#000" stroke-width="1"/><path d="M2.5 11.5H11.5" stroke="#000" stroke-width="1.2"/><rect x="9" y="9.3" width="2.5" height="1" fill="#e8d000"/></svg>
<svg class="a" style="left:1156px;top:205.5px" width="17" height="16" viewBox="0 0 17 16" ><path d="M0.8 8.5L8.5 1.8L15.5 6.5L7.5 15Z" fill="#1428c8" stroke="#0a1470" stroke-width="0.8"/><path d="M5.5 11.5L13 4.8L14.8 6.2L7.3 13.5Z" fill="#fff"/><path d="M10 1.8C11.5 0.2 14.5 0.2 15 2" fill="none" stroke="#e01818" stroke-width="1.5"/><circle cx="9.3" cy="4.2" r="0.8" fill="#fff"/></svg>
<svg class="a" style="left:1180.5px;top:205.5px" width="17" height="17" viewBox="0 0 17 17" ><path d="M1 7.5L8 1.5L12 4L5 10.5Z" fill="#fff" stroke="#9a9a9a" stroke-width="0.9"/><path d="M5 10.5L12 4L16 6L9 12.8Z" fill="#fff" stroke="#9a9a9a" stroke-width="0.9"/><path d="M3.5 7.5L8.5 3.2M5 8.6L10 4.4M8.5 10L13.5 5.8" stroke="#b0b0b0" stroke-width="0.7"/><text x="0.5" y="16.6" font-family="Liberation Sans,sans-serif" font-weight="bold" font-size="5.6" fill="#9a9a9a" letter-spacing="0.2">Goto</text></svg>
<svg class="a" style="left:1205px;top:205px" width="18" height="17" viewBox="0 0 18 17" ><rect x="1" y="0.8" width="16.2" height="9.5" fill="#fff" stroke="#000" stroke-width="1.2"/><rect x="1" y="0.5" width="16.2" height="2" fill="#000"/><circle cx="7.5" cy="4.8" r="3.4" fill="#c8c8c8" stroke="#555" stroke-width="1"/><path d="M4.6 7.2L1.5 10" stroke="#555" stroke-width="1.6"/><rect x="0.3" y="10.2" width="17.5" height="6.5" fill="#ffee00"/><text x="9" y="15.8" text-anchor="middle" font-family="Liberation Sans,sans-serif" font-weight="bold" font-size="6.6" fill="#000">Filter</text></svg>
<svg class="a" style="left:1230px;top:205px" width="18" height="17" viewBox="0 0 18 17" ><rect x="0.8" y="0.8" width="16.4" height="15.4" fill="#d0d0d0" stroke="#000" stroke-width="1.3"/><rect x="0.8" y="0.5" width="16.4" height="2" fill="#000"/><circle cx="7.5" cy="5.2" r="3.5" fill="#c0c0c0" stroke="#444" stroke-width="1"/><path d="M4.6 7.6L1.8 10.2" stroke="#444" stroke-width="1.6"/><rect x="3" y="10.8" width="8.5" height="3.4" fill="#fff" stroke="#000" stroke-width="1"/><rect x="13" y="10.8" width="2.6" height="3.4" fill="#fff" stroke="#000" stroke-width="0.8"/><path d="M12.5 4H15.5M12.5 6H15.5M12.5 8H15.5" stroke="#1a2bb0" stroke-width="0.9"/></svg>
<svg class="a" style="left:1256px;top:206px" width="17" height="16" viewBox="0 0 17 16" ><path d="M0.8 0.8H6.5L8.5 2.8V9.5H0.8Z" fill="#fff" stroke="#000" stroke-width="1.1"/><path d="M2.3 3.5H6M2.3 5.3H7M2.3 7.1H7" stroke="#000" stroke-width="0.8"/><path d="M8.5 1.2H12.6V3.8H14.6L11.6 7.6L8.6 3.8H10.3Z" fill="#e81010" transform="translate(1.3,0.2)"/><rect x="7.5" y="8.3" width="8.5" height="7.2" fill="#000"/><rect x="9.3" y="8.3" width="4.8" height="2.8" fill="#e8e8e8"/><rect x="9.8" y="12.6" width="3.8" height="2.9" fill="#bdbdbd"/></svg>
<svg class="a" style="left:1281.5px;top:206px" width="17" height="16" viewBox="0 0 17 16" ><rect x="0.5" y="0.5" width="16" height="15" fill="#b4b4b4"/><path d="M5.5 1.5H14.5V14.5H5.5" fill="#fff" stroke="#333" stroke-width="1"/><path d="M9 1.5L14.5 3.8V15.5L9 13Z" fill="#0f8f8f" stroke="#064848" stroke-width="0.8"/><path d="M0.8 7.2H6V5L10 8.2L6 11.4V9.2H0.8Z" fill="#30d0e8" stroke="#0a5a70" stroke-width="0.7"/></svg>
<div style="left:822px;top:227px;width:526px;height:1px;background:#c4c4c4"></div>
<div style="left:822px;top:228px;width:526px;height:1px;background:#b0b0b0"></div>
<div style="left:822px;top:229px;width:526px;height:1px;background:#d8d8d8"></div>
<svg class="a" style="left:825.5px;top:235.5px" width="17" height="14" viewBox="0 0 17 14" ><path d="M0.8 6.8L7.2 0.8L16 5.2L8.6 12.6Z" fill="#fff" stroke="#000" stroke-width="1" stroke-linejoin="round"/><path d="M4.2 9.6L11.4 2.9" stroke="#000" stroke-width="0.9"/><path d="M0.8 7.6L8.6 13.6L16 6.2" fill="none" stroke="#1a1aee" stroke-width="1.1"/></svg>
<div style="left:843px;top:231px;width:1px;height:20px;background:#000"></div>
<div style="left:890px;top:231px;width:1px;height:20px;background:#000"></div>
<div style="left:925px;top:231px;width:1px;height:20px;background:#000"></div>
<div style="left:1229.5px;top:231px;width:1px;height:20px;background:#000"></div>
<div style="left:824px;top:252px;width:506px;height:1px;background:#000"></div>
<span class="t" style="left:845.5px;top:235px;color:#444">Código</span>
<span class="t" style="left:892.5px;top:235px;color:#444">CFOP</span>
<span class="t" style="left:927.5px;top:235px;color:#444">Descrição</span>
<span class="t" style="left:1232.5px;top:235px;color:#444">Tipo Regime</span>
<div style="left:890px;top:253px;width:1px;height:288px;background:#d0d0d0"></div>
<div style="left:925px;top:253px;width:1px;height:288px;background:#d0d0d0"></div>
<div style="left:1229.5px;top:253px;width:1px;height:288px;background:#d0d0d0"></div>
<div style="left:843px;top:253px;width:1px;height:288px;background:#000"></div>
<div style="left:844px;top:269px;width:486px;height:1px;background:#d0d0d0"></div>
<div style="left:825px;top:269px;width:18px;height:1px;background:#000"></div>
<span class="t" style="left:846px;top:255px;">5909</span>
<span class="t" style="left:893px;top:255px;">5909</span>
<span class="t" style="left:927.5px;top:255px;letter-spacing:0.28px">RETORNO DE COMODATO</span>
<span class="t" style="left:1233px;top:255px;">Todos</span>
<div style="left:844px;top:286px;width:486px;height:1px;background:#d0d0d0"></div>
<div style="left:825px;top:286px;width:18px;height:1px;background:#000"></div>
<span class="t" style="left:846px;top:272px;">5910</span>
<span class="t" style="left:893px;top:272px;">5910</span>
<span class="t" style="left:927.5px;top:272px;letter-spacing:0.28px">REM BONIF BRINDE</span>
<span class="t" style="left:1233px;top:272px;">Todos</span>
<div style="left:844px;top:303px;width:486px;height:1px;background:#d0d0d0"></div>
<div style="left:825px;top:303px;width:18px;height:1px;background:#000"></div>
<span class="t" style="left:846px;top:289px;">5911</span>
<span class="t" style="left:893px;top:289px;">5911</span>
<span class="t" style="left:927.5px;top:289px;letter-spacing:0.28px">REM AMOSTRA GRATIS</span>
<span class="t" style="left:1233px;top:289px;">Todos</span>
<div style="left:844px;top:320px;width:486px;height:1px;background:#d0d0d0"></div>
<div style="left:825px;top:320px;width:18px;height:1px;background:#000"></div>
<span class="t" style="left:846px;top:306px;">5912</span>
<span class="t" style="left:893px;top:306px;">5912</span>
<span class="t" style="left:927.5px;top:306px;letter-spacing:0.28px">REM MERC.DEMONS</span>
<span class="t" style="left:1233px;top:306px;">Todos</span>
<div style="left:844px;top:337px;width:486px;height:1px;background:#d0d0d0"></div>
<div style="left:825px;top:337px;width:18px;height:1px;background:#000"></div>
<span class="t" style="left:846px;top:323px;">5914</span>
<span class="t" style="left:893px;top:323px;">5914</span>
<span class="t" style="left:927.5px;top:323px;letter-spacing:0.28px">REM MERC EXP/FEIRA</span>
<span class="t" style="left:1233px;top:323px;">Todos</span>
<div style="left:844px;top:354px;width:486px;height:1px;background:#d0d0d0"></div>
<div style="left:825px;top:354px;width:18px;height:1px;background:#000"></div>
<span class="t" style="left:846px;top:340px;">5915</span>
<span class="t" style="left:893px;top:340px;">5915</span>
<span class="t" style="left:927.5px;top:340px;letter-spacing:0.28px">REMESSA MERC.REPARO</span>
<span class="t" style="left:1233px;top:340px;">Todos</span>
<div style="left:844px;top:371px;width:486px;height:1px;background:#d0d0d0"></div>
<div style="left:825px;top:371px;width:18px;height:1px;background:#000"></div>
<span class="t" style="left:846px;top:357px;">5916</span>
<span class="t" style="left:893px;top:357px;">5916</span>
<span class="t" style="left:927.5px;top:357px;letter-spacing:0.28px">RETO MERC CONSERTO</span>
<span class="t" style="left:1233px;top:357px;">Todos</span>
<div style="left:844px;top:388px;width:486px;height:1px;background:#d0d0d0"></div>
<div style="left:825px;top:388px;width:18px;height:1px;background:#000"></div>
<span class="t" style="left:846px;top:374px;">5917</span>
<span class="t" style="left:893px;top:374px;">5917</span>
<span class="t" style="left:927.5px;top:374px;letter-spacing:0.28px">REM.MERC EM CONS.MERCANT/</span>
<span class="t" style="left:1233px;top:374px;">Todos</span>
<div style="left:844px;top:405px;width:486px;height:1px;background:#d0d0d0"></div>
<div style="left:825px;top:405px;width:18px;height:1px;background:#000"></div>
<span class="t" style="left:846px;top:391px;">5921</span>
<span class="t" style="left:893px;top:391px;">5921</span>
<span class="t" style="left:927.5px;top:391px;letter-spacing:0.28px">DEVOL VASILHAME/SACARIA</span>
<span class="t" style="left:1233px;top:391px;">Todos</span>
<div style="left:844px;top:422px;width:486px;height:1px;background:#d0d0d0"></div>
<div style="left:825px;top:422px;width:18px;height:1px;background:#000"></div>
<span class="t" style="left:846px;top:408px;">5929</span>
<span class="t" style="left:893px;top:408px;">5929</span>
<span class="t" style="left:927.5px;top:408px;letter-spacing:0.28px">VENDA COM ECF</span>
<span class="t" style="left:1233px;top:408px;">Todos</span>
<div style="left:844px;top:439px;width:486px;height:1px;background:#d0d0d0"></div>
<div style="left:825px;top:439px;width:18px;height:1px;background:#000"></div>
<span class="t" style="left:846px;top:425px;">5949</span>
<span class="t" style="left:893px;top:425px;">5949</span>
<span class="t" style="left:927.5px;top:425px;letter-spacing:0.28px">OUTRA SAIDA NAO ESPECIF</span>
<span class="t" style="left:1233px;top:425px;">Todos</span>
<div style="left:844px;top:456px;width:486px;height:1px;background:#d0d0d0"></div>
<div style="left:825px;top:456px;width:18px;height:1px;background:#000"></div>
<span class="t" style="left:846px;top:442px;">6101</span>
<span class="t" style="left:893px;top:442px;">6101</span>
<span class="t" style="left:927.5px;top:442px;letter-spacing:0.28px">VENDA DE PRODUÇÃO ESTAB</span>
<span class="t" style="left:1233px;top:442px;">Todos</span>
<div style="left:844px;top:473px;width:486px;height:1px;background:#d0d0d0"></div>
<div style="left:825px;top:473px;width:18px;height:1px;background:#000"></div>
<span class="t" style="left:846px;top:459px;">6102</span>
<span class="t" style="left:893px;top:459px;">6102</span>
<span class="t" style="left:927.5px;top:459px;letter-spacing:0.28px">VENDA MERC AD TERC</span>
<span class="t" style="left:1233px;top:459px;">Todos</span>
<div style="left:844px;top:490px;width:486px;height:1px;background:#d0d0d0"></div>
<div style="left:825px;top:490px;width:18px;height:1px;background:#000"></div>
<span class="t" style="left:846px;top:476px;">6104</span>
<span class="t" style="left:893px;top:476px;">6104</span>
<span class="t" style="left:927.5px;top:476px;letter-spacing:0.28px">VD MERC AD TERC FO</span>
<span class="t" style="left:1233px;top:476px;">Todos</span>
<div style="left:844px;top:507px;width:486px;height:1px;background:#d0d0d0"></div>
<div style="left:825px;top:507px;width:18px;height:1px;background:#000"></div>
<span class="t" style="left:846px;top:493px;">6108</span>
<span class="t" style="left:893px;top:493px;">6108</span>
<span class="t" style="left:927.5px;top:493px;">Venda de mercadoria destinada a não contribuinte</span>
<span class="t" style="left:1233px;top:493px;">Todos</span>
<div style="left:844px;top:524px;width:486px;height:1px;background:#d0d0d0"></div>
<div style="left:825px;top:524px;width:18px;height:1px;background:#000"></div>
<span class="t" style="left:846px;top:510px;">6152</span>
<span class="t" style="left:893px;top:510px;">6152</span>
<span class="t" style="left:927.5px;top:510px;letter-spacing:0.28px">TRANSF MERC AD TER</span>
<span class="t" style="left:1233px;top:510px;">Todos</span>
<span class="t" style="left:846px;top:527px;">6202</span>
<span class="t" style="left:893px;top:527px;">6202</span>
<span class="t" style="left:927.5px;top:527px;letter-spacing:0.28px">DEV COMPRA COMERC</span>
<span class="t" style="left:1233px;top:527px;">Todos</span>
<svg class="a" style="left:832px;top:460px" width="7" height="11" viewBox="0 0 7 11" ><path d="M0.5 0.5L6.5 5.5L0.5 10.5Z" fill="#000"/></svg>
<div style="left:926.5px;top:457px;width:303.5px;height:16px;border:1px dotted #b36b00;outline:0;box-sizing:border-box"></div>
<div style="left:926.5px;top:457px;width:303.5px;height:16px;border:1px dotted #000;opacity:.55;box-sizing:border-box"></div>
<div style="left:1330px;top:229px;width:18px;height:312px;background:#f0f0f0"></div>
<div style="left:1331px;top:453px;width:15px;height:39.5px;background:#cdcdcd"></div>
<svg class="a" style="left:1334px;top:236px" width="9" height="6" viewBox="0 0 9 6" ><path d="M1.2 5.3L4.5 2L7.8 5.3" fill="none" stroke="#5a5a5a" stroke-width="1.9"/></svg>
<svg class="a" style="left:1334px;top:530px" width="9" height="6" viewBox="0 0 9 6" ><path d="M1.2 0.9L4.5 4.2L7.8 0.9" fill="none" stroke="#5a5a5a" stroke-width="1.9"/></svg>
<div style="left:822px;top:542px;width:526px;height:17px;background:#f0f0f0"></div>
<div style="left:841px;top:542px;width:17px;height:15px;background:#cdcdcd"></div>
<svg class="a" style="left:829px;top:545.2px" width="6" height="9" viewBox="0 0 6 9" ><path d="M4.9 1.2L1.6 4.5L4.9 7.8" fill="none" stroke="#5a5a5a" stroke-width="1.9"/></svg>
<svg class="a" style="left:1319px;top:545px" width="6" height="9" viewBox="0 0 6 9" ><path d="M1.1 1.2L4.4 4.5L1.1 7.8" fill="none" stroke="#5a5a5a" stroke-width="1.9"/></svg>
<div style="left:821px;top:560px;width:528px;height:20px;background:#f0f0f0;border:1px solid #dcdcdc;border-top:none;box-sizing:border-box"></div>
<div style="left:1021px;top:562px;width:1px;height:16px;background:#d4d4d4"></div>
<div style="left:1345px;top:575px;width:2px;height:2px;background:#b8b8b8"></div>
<div style="left:1342px;top:575px;width:2px;height:2px;background:#b8b8b8"></div>
<div style="left:1345px;top:572px;width:2px;height:2px;background:#b8b8b8"></div>
<div style="left:1339px;top:575px;width:2px;height:2px;background:#b8b8b8"></div>
<div style="left:1342px;top:572px;width:2px;height:2px;background:#b8b8b8"></div>
<div style="left:1345px;top:569px;width:2px;height:2px;background:#b8b8b8"></div>
<div style="left:0px;top:673px;width:1360px;height:1px;background:#dedede"></div>
<div style="left:0px;top:674px;width:1360px;height:1px;background:#f4f4f4"></div>
<div style="left:0px;top:675px;width:1360px;height:2px;background:#d2d2d2"></div>
<div style="left:0px;top:677px;width:1360px;height:61px;background:#f7f7f7"></div>
<div style="left:0px;top:675px;width:1px;height:63px;background:#c8c8c8"></div>
<div style="left:1358px;top:675px;width:1px;height:63px;background:#d0d0d0"></div>
<span class="ar" style="left:63px;top:683.0px;font-size:16px;line-height:18px">Central</span>
<span class="ar" style="left:63px;top:701.0px;font-size:13px;line-height:18px">Loja</span>
<span class="ar" style="left:127px;top:701.0px;font-size:13px;line-height:18px">99</span>
<span class="ar" style="left:63px;top:719.0px;font-size:13px;line-height:18px">Terminal</span>
<span class="ar" style="left:127px;top:719.0px;font-size:13px;line-height:18px">0</span>
<span class="ar" style="left:148px;top:719.0px;font-size:13px;line-height:18px">Equipamento</span>
<span class="ar" style="left:241px;top:719.0px;font-size:13px;line-height:18px">0</span>
<span class="ar" style="left:329px;top:683.0px;font-size:16px;line-height:18px">MASTER</span>
<span class="ar" style="left:329px;top:701.0px;font-size:13px;line-height:18px">Cargo:</span>
<span class="ar" style="left:329px;top:719.0px;font-size:13px;line-height:18px">Direitos:</span>
<span class="ar" style="left:584px;top:683.0px;font-size:16px;line-height:18px">Série</span>
<span class="ar" style="left:584px;top:701.0px;font-size:13px;line-height:18px">Versão</span>
<span class="ar" style="left:638px;top:701.0px;font-size:13px;line-height:18px">9.1.38.0</span>
<span class="ar" style="left:584px;top:719.0px;font-size:13px;line-height:18px">G:\SCL\Dados\</span>
<span class="ar" style="left:966px;top:681.0px;font-size:13px;line-height:18px">Replicador</span>
<svg class="a" style="left:15.5px;top:692.5px" width="30" height="32" viewBox="0 0 30 32" ><defs><linearGradient id="gSkin" x1="0" y1="0" x2="1" y2="1"><stop offset="0" stop-color="#fbe3b8"/><stop offset="1" stop-color="#e0a868"/></linearGradient><linearGradient id="gHair" x1="0" y1="0" x2="0" y2="1"><stop offset="0" stop-color="#c8783a"/><stop offset="1" stop-color="#8a4616"/></linearGradient><linearGradient id="gRed" x1="0" y1="0" x2="0" y2="1"><stop offset="0" stop-color="#d8403c"/><stop offset="1" stop-color="#a01c1c"/></linearGradient><linearGradient id="gGold" x1="0" y1="0" x2="1" y2="1"><stop offset="0" stop-color="#fbe08a"/><stop offset="1" stop-color="#d88a18"/></linearGradient><linearGradient id="gGreen" x1="0" y1="0" x2="0" y2="1"><stop offset="0" stop-color="#86b84e"/><stop offset="1" stop-color="#3f7e1c"/></linearGradient><linearGradient id="gCyl" x1="0" y1="0" x2="1" y2="0"><stop offset="0" stop-color="#f2cc7a"/><stop offset="0.4" stop-color="#fbeab8"/><stop offset="1" stop-color="#cf923a"/></linearGradient><linearGradient id="gBadge" x1="0" y1="0" x2="0" y2="1"><stop offset="0" stop-color="#9acb12"/><stop offset="1" stop-color="#43861c"/></linearGradient><linearGradient id="gBub" x1="0" y1="0" x2="0" y2="1"><stop offset="0" stop-color="#fbe0a8"/><stop offset="1" stop-color="#e9a64c"/></linearGradient></defs><path d="M1 31Q0.6 21.5 6 19.2L10.4 17.8H16.2L21 19.4Q25.4 21.6 25.6 31Z" fill="#f4f4f4" stroke="#b8b8b8" stroke-width="0.6"/><path d="M4.6 20L9.4 18.4L13.2 24L17 18.4L21.6 20L22.6 31H4Z" fill="url(#gRed)"/><path d="M8.6 17.6L13.2 23.4L17.8 17.6L19.4 20.6L15 24.6L13.2 23.4L11.4 24.6L7 20.6Z" fill="#fff" stroke="#c8c8c8" stroke-width="0.4"/><path d="M10.2 14H16.2V19L13.2 20.6L10.2 19Z" fill="#d89858"/><ellipse cx="13.2" cy="10" rx="5.4" ry="6.6" fill="url(#gSkin)" stroke="#a8642c" stroke-width="0.5"/><path d="M5.8 10.6Q4.6 2.2 11.2 0.8Q16.8 -0.4 19.6 3.4Q21.4 6.6 19.6 12.2Q19 7.4 16.4 5Q12.2 7.8 8.6 7.4Q7.8 9.8 7.6 13.4Q6.2 12.4 5.8 10.6Z" fill="url(#gHair)"/><path d="M13.4 29.6L22.2 20.6" stroke="#b87410" stroke-width="3.6" stroke-linecap="round"/><path d="M13.4 29.6L22.2 20.6" stroke="#f2c04a" stroke-width="2.2" stroke-linecap="round"/><circle cx="24" cy="18.6" r="4.2" fill="url(#gGold)" stroke="#b87410" stroke-width="0.8"/><circle cx="25" cy="17.6" r="1.1" fill="#fff" stroke="#b87410" stroke-width="0.5"/><path d="M15 28.4L16.6 30M17 26.4L18.6 28" stroke="#f2c04a" stroke-width="1.4"/></svg>
<svg class="a" style="left:280.5px;top:689px" width="30" height="31" viewBox="0 0 30 31" ><path d="M12.6 18Q13 12 18 11.4H22.6Q25.4 12.6 25.6 18Z" fill="url(#gGreen)"/><path d="M15.2 8.6H19.4V12.4L17.2 13.4L15.2 12.4Z" fill="#d89858"/><ellipse cx="17.4" cy="6.4" rx="4.6" ry="5.6" fill="url(#gSkin)"/><path d="M11.8 5.4Q12.2 0.2 17.8 0.2Q22.8 0.6 22.6 6.2Q22.2 8.2 21.2 9.2Q21.4 5.2 18.6 3.6Q15 4.6 12.4 4.2Z" fill="url(#gHair)"/><path d="M0.2 24.6Q0.2 18.2 5.8 17.2H12.6Q17.6 18.2 17.4 24.6Q9 26.6 0.2 24.6Z" fill="url(#gGreen)"/><path d="M7.4 14.6H12V18L9.8 19.2L7.4 18Z" fill="#d89858"/><ellipse cx="9.8" cy="11" rx="5.2" ry="6.4" fill="url(#gSkin)"/><path d="M4.6 12Q3 4.4 9.6 3.8Q15.8 3.6 15.8 10.2Q15.6 12.4 14.8 13.6Q14.8 9.4 12.4 7.8Q8.4 9.2 6.6 8.4Q5.8 10 5.8 13.8Q4.8 13.2 4.6 12Z" fill="url(#gHair)"/><path d="M25.89 22.52 L28.10 23.01 L27.63 25.29 L25.41 24.88 L24.71 25.92 L25.93 27.82 L23.99 29.11 L22.71 27.25 L21.48 27.49 L20.99 29.70 L18.71 29.23 L19.12 27.01 L18.08 26.31 L16.18 27.53 L14.89 25.59 L16.75 24.31 L16.51 23.08 L14.30 22.59 L14.77 20.31 L16.99 20.72 L17.69 19.68 L16.47 17.78 L18.41 16.49 L19.69 18.35 L20.92 18.11 L21.41 15.90 L23.69 16.37 L23.28 18.59 L24.32 19.29 L26.22 18.07 L27.51 20.01 L25.65 21.29Z" fill="#d6dcea" stroke="#5a6894" stroke-width="0.8" stroke-linejoin="round"/><circle cx="21.2" cy="22.8" r="2.2" fill="#8a96b8" stroke="#3c4878" stroke-width="0.9"/><circle cx="21.2" cy="22.8" r="0.8" fill="#d6dcea"/></svg>
<svg class="a" style="left:538.5px;top:688.5px" width="30" height="32" viewBox="0 0 30 32" ><path d="M0.6 3.6V17.6Q0.6 20.8 9.1 20.8Q17.6 20.8 17.6 17.6V3.6Z" fill="url(#gCyl)" stroke="#b8863a" stroke-width="0.8"/><ellipse cx="9.1" cy="3.6" rx="8.5" ry="3" fill="#fbedc4" stroke="#b8863a" stroke-width="0.8"/><path d="M0.6 8.4Q0.6 11.4 9.1 11.4Q17.6 11.4 17.6 8.4M0.6 13Q0.6 16 9.1 16Q17.6 16 17.6 13" fill="none" stroke="#c89848" stroke-width="0.8"/><path d="M15 9.6H28.2V30H11.8V12.8Z" fill="#f3f7fd" stroke="#5a8ad0" stroke-width="1"/><path d="M15 9.6V12.8H11.8Z" fill="#fff" stroke="#5a8ad0" stroke-width="0.7"/><path d="M17.6 13.6H24.4M22 16.6H24.4M15.6 19.6H24.4M15.6 25.6H24.4" stroke="#7aa2dc" stroke-width="0.9"/><rect x="14.8" y="15.2" width="5.2" height="2.6" rx="1.2" fill="#fff" stroke="#e0a020" stroke-width="1.1"/><rect x="18.8" y="21.2" width="5.2" height="2.6" rx="1.2" fill="#fff" stroke="#e0a020" stroke-width="1.1"/><path d="M7.6 17.2H10Q10 21.4 13.6 21.6V19.4L17.6 22.8L13.6 26.2V24Q7.6 24 7.6 17.2Z" fill="#4aa82a" stroke="#2a7a14" stroke-width="0.6"/></svg>
<svg class="a" style="left:1037px;top:679px" width="18" height="18" viewBox="0 0 18 18" ><path d="M17.20 9.00 L16.02 10.60 L16.39 12.56 L14.63 13.49 L14.11 15.41 L12.12 15.49 L10.82 16.99 L9.00 16.20 L7.18 16.99 L5.88 15.49 L3.89 15.41 L3.37 13.49 L1.61 12.56 L1.98 10.60 L0.80 9.00 L1.98 7.40 L1.61 5.44 L3.37 4.51 L3.89 2.59 L5.88 2.51 L7.18 1.01 L9.00 1.80 L10.82 1.01 L12.12 2.51 L14.11 2.59 L14.63 4.51 L16.39 5.44 L16.02 7.40Z" fill="url(#gBadge)" stroke="#dfe8d0" stroke-width="0.6" stroke-linejoin="round"/></svg>
<svg class="a" style="left:1090.5px;top:690px" width="34" height="34" viewBox="0 0 34 34" ><path d="M26.4 5.4A15.6 15.6 0 1 0 31 11.2" fill="none" stroke="#8a2c8c" stroke-width="1.35"/><path d="M6.6 19.6L20.4 7.8L27 7.2L27 14.2L14.6 28Z" fill="none" stroke="#8a2c8c" stroke-width="1.45" stroke-linejoin="miter"/><circle cx="23.7" cy="10.6" r="0.9" fill="#8a2c8c"/><path d="M10.2 19.6L15.4 25.2M12.6 17.6L17.6 23M15 15.6L19.8 20.8" stroke="#8a2c8c" stroke-width="1.1"/></svg>
<svg class="a" style="left:1144.5px;top:692px" width="30" height="30" viewBox="0 0 30 30" ><defs><linearGradient id="gRG" x1="0" y1="0" x2="0" y2="1"><stop offset="0" stop-color="#b4dc5c"/><stop offset="1" stop-color="#5a9a1c"/></linearGradient><linearGradient id="gRB" x1="0" y1="0" x2="0" y2="1"><stop offset="0" stop-color="#a8d4f4"/><stop offset="1" stop-color="#3a7cc8"/></linearGradient></defs><path d="M1 18.6Q-0.6 7.6 11 5.2L17 4.6V0.6L28.6 6.8L17 13.4V9.6Q6.6 9.2 3.4 17.4Z" fill="url(#gRG)" stroke="#5a8a1c" stroke-width="0.6"/><path d="M28.4 11Q30 22 18.4 24.4L12.4 25V29L0.8 22.8L12.4 16.2V20Q22.8 20.4 26 12.2Z" fill="url(#gRB)" stroke="#3a6cb0" stroke-width="0.6"/></svg>
<svg class="a" style="left:1200px;top:694px" width="30" height="27" viewBox="0 0 30 27" ><rect x="0.6" y="0.6" width="25.4" height="18.4" rx="1" fill="#fbfcfe" stroke="#7a8cc0" stroke-width="0.9"/><path d="M1 1L13.4 11L25.6 1" fill="none" stroke="#a8b2d4" stroke-width="0.8"/><path d="M1 18.6L9.6 8" fill="none" stroke="#c0c8e0" stroke-width="0.7"/><path d="M0.6 3V6M0.6 9V12M0.6 15V18M3 19H6M9 19H12M22.6 0.6H25.4L26 3" stroke="#e04848" stroke-width="1.2" fill="none"/><path d="M0.6 6V9M0.6 12V15M6 19H9M1 1H4" stroke="#4870d0" stroke-width="1.2"/><rect x="11.4" y="6.8" width="17.4" height="19" fill="#fff" stroke="#6a7cbc" stroke-width="1"/><rect x="14" y="9.4" width="12.2" height="2.6" fill="#a8b4dc"/><rect x="14" y="13.4" width="2.6" height="2.6" fill="#a8b4dc"/><rect x="18" y="13.4" width="8.2" height="2.6" fill="#a8b4dc"/><rect x="14" y="17.4" width="12.2" height="5.6" fill="#a8b4dc"/></svg>
<svg class="a" style="left:1257.5px;top:692px" width="28" height="28" viewBox="0 0 28 28" ><rect x="0.6" y="15.6" width="5.2" height="11.000000000000002" rx="0.8" fill="#f0923a" stroke="#c86818" stroke-width="0.8"/><rect x="1.7999999999999998" y="16.6" width="1.6" height="9.799999999999999" fill="#fbc488" opacity="0.7"/><rect x="7.6" y="9.6" width="5.2" height="17.0" rx="0.8" fill="#5aa028" stroke="#3a7a14" stroke-width="0.8"/><rect x="8.799999999999999" y="10.6" width="1.6" height="15.799999999999999" fill="#a4d470" opacity="0.7"/><rect x="14.6" y="0.8" width="5.4" height="25.8" rx="0.8" fill="#5a9ce0" stroke="#2a68b8" stroke-width="0.8"/><rect x="15.799999999999999" y="1.8" width="1.7000000000000002" height="24.599999999999998" fill="#b4d8f8" opacity="0.7"/><rect x="21.6" y="5.6" width="5.4" height="21.0" rx="0.8" fill="#e0544a" stroke="#b02a24" stroke-width="0.8"/><rect x="22.8" y="6.6" width="1.7000000000000002" height="19.799999999999997" fill="#f4a49c" opacity="0.7"/></svg>
<svg class="a" style="left:1311.5px;top:692px" width="30" height="28" viewBox="0 0 30 28" ><path d="M2.4 4.2H23Q24.6 4.2 24.6 5.8V18.4Q24.6 20 23 20H10.6L3.8 26.4V20H2.4Q0.8 20 0.8 18.4V5.8Q0.8 4.2 2.4 4.2Z" fill="url(#gBub)" stroke="#c88a38" stroke-width="0.9" stroke-linejoin="round"/><path d="M22.40 0.40 L23.70 3.66 L26.93 2.27 L25.54 5.50 L28.80 6.80 L25.54 8.10 L26.93 11.33 L23.70 9.94 L22.40 13.20 L21.10 9.94 L17.87 11.33 L19.26 8.10 L16.00 6.80 L19.26 5.50 L17.87 2.27 L21.10 3.66Z" fill="#f2a428" stroke="#fdf0d0" stroke-width="0.9" stroke-linejoin="round"/></svg>
<span style="left:1342px;top:698px;font:bold 14px 'Liberation Serif',serif;color:#000;line-height:16px">2</span>
<div style="left:0px;top:738px;width:1360px;height:30px;background:#101010"></div>
<div style="left:297px;top:738px;width:36px;height:30px;background:#2d2d2d"></div>
<div style="left:153px;top:766px;width:28px;height:2px;background:#e6e6e6"></div>
<div style="left:190px;top:766px;width:28px;height:2px;background:#e6e6e6"></div>
<div style="left:227px;top:766px;width:28px;height:2px;background:#e6e6e6"></div>
<div style="left:264px;top:766px;width:27px;height:2px;background:#e6e6e6"></div>
<div style="left:297px;top:766px;width:36px;height:2px;background:#e6e6e6"></div>
<div style="left:338px;top:766px;width:28px;height:2px;background:#e6e6e6"></div>
<div style="left:288px;top:766px;width:3px;height:2px;background:#9a9a9a"></div>
<svg class="a" style="left:9.5px;top:744.5px" width="17" height="17" viewBox="0 0 17 17" ><path d="M0.3 2.6L7.2 1.6V8H0.3ZM8.2 1.4L16.8 0.2V8H8.2ZM0.3 9H7.2V15.4L0.3 14.4ZM8.2 9H16.8V16.8L8.2 15.6Z" fill="#fff"/></svg>
<svg class="a" style="left:45px;top:744px" width="18" height="18" viewBox="0 0 18 18" ><circle cx="11" cy="6.9" r="5.4" fill="none" stroke="#fff" stroke-width="1.3"/><path d="M7.2 10.9L1.2 16.9" stroke="#fff" stroke-width="1.5"/></svg>
<svg class="a" style="left:84.5px;top:744.5px" width="17" height="16" viewBox="0 0 17 16" ><path d="M0.5 6L8.5 0.6L16.5 6V15.4H0.5Z" fill="#0b5cc0"/><path d="M2.4 4.8H14.6V11H2.4Z" fill="#f4f8fc"/><path d="M0.5 6L8.5 10.6L16.5 6V15.4H0.5Z" fill="#2aa4e8"/><path d="M0.5 15.4L16.5 6V15.4Z" fill="#1a8ad8" opacity="0.7"/><path d="M2.4 4.8H14.6L8.5 8.6Z" fill="#dce8f4"/></svg>
<svg class="a" style="left:121.5px;top:744px" width="18" height="18" viewBox="0 0 18 18" ><ellipse cx="8.8" cy="8.8" rx="7.6" ry="7.6" fill="none" stroke="#d81e3e" stroke-width="1.6"/><ellipse cx="8.8" cy="8.8" rx="3.6" ry="6.6" fill="none" stroke="#d81e3e" stroke-width="1.3"/></svg>
<svg class="a" style="left:158.5px;top:745px" width="18" height="16" viewBox="0 0 18 16" ><path d="M0.6 2Q0.6 0.8 1.8 0.8H6.4L8 2.6H0.6Z" fill="#e8a818"/><rect x="0.6" y="2.4" width="16.4" height="11.6" rx="0.8" fill="#fbcf48"/><rect x="0.6" y="2.4" width="16.4" height="3" fill="#f4be2c"/><path d="M3.8 14.6V9Q3.8 8.2 4.6 8.2H13Q13.8 8.2 13.8 9V14.6H11V11.2H6.6V14.6Z" fill="#3a98ea"/><rect x="3.2" y="12.8" width="11.2" height="1.8" fill="#2a7fd0"/><rect x="6.6" y="11.2" width="4.4" height="3.4" fill="#fbcf48"/></svg>
<svg class="a" style="left:196.5px;top:745.5px" width="16" height="16" viewBox="0 0 16 16" ><circle cx="7.6" cy="7.6" r="7.3" fill="#e23c30"/><path d="M7.6 7.6L1.3 3.9A7.3 7.3 0 0 0 8 14.9L11.6 9.2Z" fill="#2a9c46"/><path d="M7.6 7.6L11.2 9.8L7.8 14.9A7.3 7.3 0 0 0 14.3 4.6H7.6Z" fill="#f8c42c"/><circle cx="7.6" cy="7.6" r="3.5" fill="#fff"/><circle cx="7.6" cy="7.6" r="2.7" fill="#3a80e8"/></svg>
<svg class="a" style="left:232.5px;top:744.5px" width="17" height="16" viewBox="0 0 17 16" ><path d="M0.8 7.4L9.4 0.8L16.4 6L7.6 15.2Z" fill="#f4f4f4"/><path d="M3 7.2L9.4 2.4M4.6 8.8L11 3.8M6.2 10.2L12.6 5.2M7.6 11.8L14 6.8" stroke="#222" stroke-width="0.9"/><path d="M12.6 9.8L15.4 11.2L11.8 13.6" fill="none" stroke="#f4f4f4" stroke-width="1"/></svg>
<svg class="a" style="left:270.5px;top:744.5px" width="16" height="17" viewBox="0 0 16 17" ><path d="M3 2H14.8V15.4H1.4L0.6 13Z" fill="#e8d8b0"/><path d="M3.4 1.8H14.6V14.6H2.2Q1 10 3.4 1.8Z" fill="#a4dcec"/><path d="M4 4.6H14M3.8 6.6H14M3.4 8.6H14M3.2 10.6H14M3 12.6H14" stroke="#7cbcd4" stroke-width="0.7"/><path d="M4.4 0.4V3M6.2 0.4V3M8 0.4V3M9.8 0.4V3M11.6 0.4V3M13.4 0.4V3" stroke="#e8f4f8" stroke-width="0.9"/></svg>
<svg class="a" style="left:306.5px;top:744.5px" width="17" height="17" viewBox="0 0 16 16" ><circle cx="8" cy="8" r="7.3" fill="none" stroke="#1ea8dc" stroke-width="1.15"/>
<path d="M8.1 8L6.9 2.8M8.1 8L13 3.7M8.1 8L3.1 10.1M8.1 8L10.6 13.1M8.1 8L3.6 6.2M8.1 8L12.9 8" stroke="#1ea8dc" stroke-width="0.45" opacity="0.5"/>
<circle cx="8.1" cy="8" r="2.1" fill="#1ea8dc"/>
<circle cx="6.9" cy="2.8" r="1" fill="#1ea8dc"/><circle cx="13" cy="3.7" r="1.3" fill="#1ea8dc"/>
<circle cx="3.1" cy="10.1" r="1.25" fill="#1ea8dc"/><circle cx="10.6" cy="13.1" r="1.05" fill="#1ea8dc"/>
<path d="M2.9 6.9L3.8 5.3L4.6 6.9Z" fill="#1ea8dc"/><circle cx="12.8" cy="8" r="0.9" fill="#1ea8dc" opacity="0.55"/></svg>
<svg class="a" style="left:343.5px;top:744.5px" width="18" height="17" viewBox="0 0 18 17" ><path d="M1 10.4Q0.4 5 6.4 3.6Q12.6 2.6 13.6 7.6Q13.8 10.4 11.2 10.6Q9.2 10.8 9.6 12.6Q10 15 6.8 15Q1.8 14.8 1 10.4Z" fill="#dce8f4" stroke="#8aa0b8" stroke-width="0.5"/><circle cx="4.2" cy="10.8" r="1.3" fill="#e03030"/><circle cx="5.2" cy="7" r="1.3" fill="#38a838"/><circle cx="8.8" cy="5.6" r="1.3" fill="#f0c020"/><circle cx="11.6" cy="7.6" r="1.1" fill="#3878e0"/><path d="M14.6 4.6L16 4.6L15.8 15.6Q15.2 16.6 14.6 15.6Z" fill="#f08a1c"/><path d="M14 0.6H16.4L16 4.6H14.6Z" fill="#e8c890"/></svg>
<svg class="a" style="left:1165.5px;top:749px" width="13" height="8" viewBox="0 0 13 8" ><path d="M0.7 7L6.5 1.2L12.3 7" fill="none" stroke="#fff" stroke-width="1.3"/></svg>
<svg class="a" style="left:1187.5px;top:746.5px" width="17" height="14" viewBox="0 0 17 14" ><rect x="3.6" y="1" width="12.4" height="8.6" fill="none" stroke="#fff" stroke-width="1.1"/><path d="M9.8 9.6V12.4M6.4 12.6H13.2" stroke="#fff" stroke-width="1.1"/><rect x="0.6" y="0.6" width="4.4" height="3.6" fill="#101010" stroke="#fff" stroke-width="1"/><path d="M2.8 4.2V12.6H6.4" fill="none" stroke="#fff" stroke-width="1"/></svg>
<svg class="a" style="left:1211.5px;top:746px" width="18" height="14" viewBox="0 0 18 14" ><path d="M0.8 4.6H3.6L7 1.2V12.8L3.6 9.4H0.8Z" fill="none" stroke="#fff" stroke-width="1.1" stroke-linejoin="round"/><path d="M9.4 4.6Q10.8 7 9.4 9.4M11.6 2.8Q14 7 11.6 11.2M13.8 1Q17.4 7 13.8 13" fill="none" stroke="#fff" stroke-width="1.1"/></svg>
<svg class="a" style="left:1318px;top:745px" width="18" height="17" viewBox="0 0 18 17" ><path d="M0.4 0.2H17V13.2H11.4L8.7 16L6 13.2H0.4Z" fill="#fff"/><path d="M3.6 4H13.8M3.6 6.8H13.8M3.6 9.6H10" stroke="#101010" stroke-width="1.2"/></svg>
<div style="left:1356px;top:738px;width:1px;height:30px;background:#4a4a4a"></div>
<span style="left:1238px;top:744px;font:11.5px 'Liberation Sans',sans-serif;color:#fff;line-height:16px;letter-spacing:-0.6px">POR</span>
<span style="left:1274px;top:744px;font:12px 'Liberation Sans',sans-serif;color:#fff;line-height:16px;letter-spacing:-0.3px">10:22</span>
</body></html>
